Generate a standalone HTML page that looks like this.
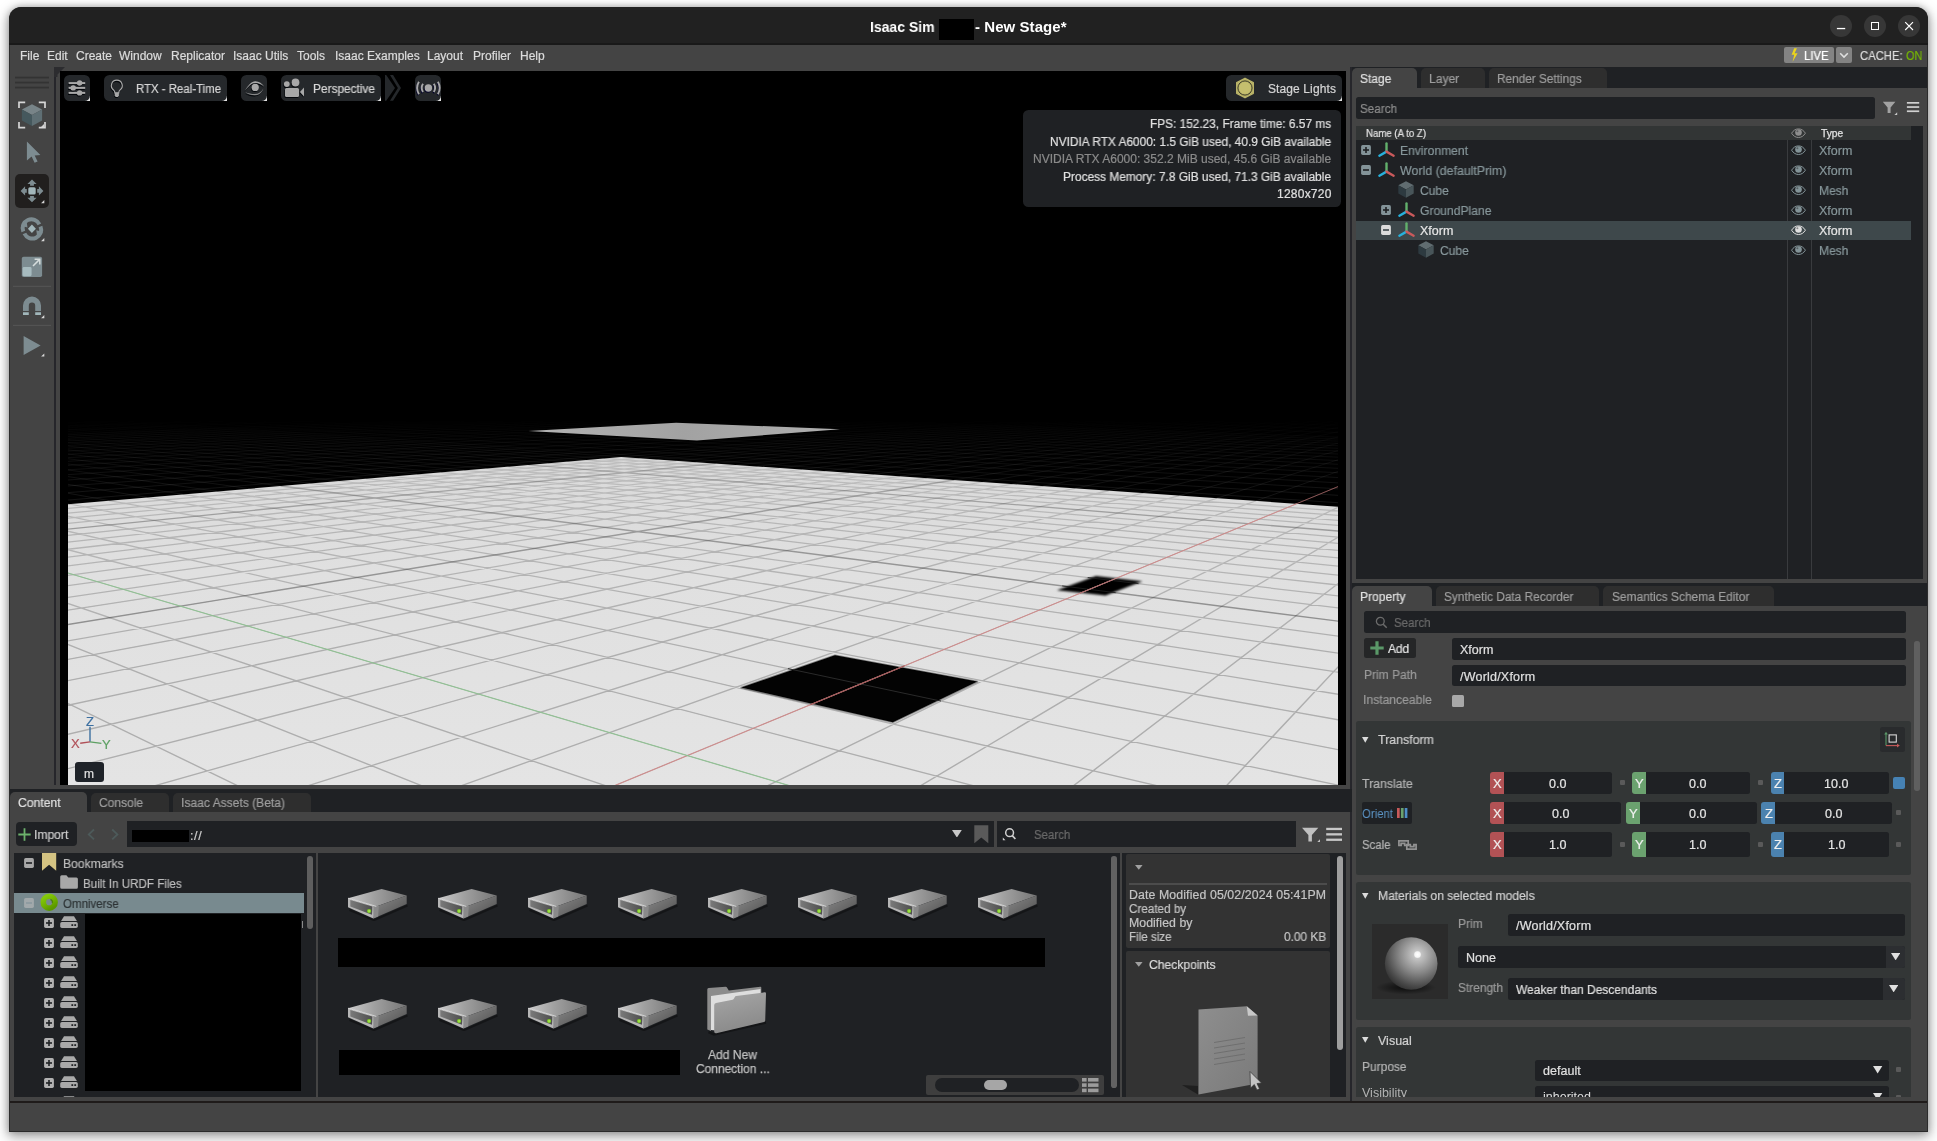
<!DOCTYPE html>
<html lang="en">
<head>
<meta charset="utf-8">
<title>Isaac Sim - New Stage*</title>
<style>
*{box-sizing:border-box;margin:0;padding:0}
html,body{width:1937px;height:1141px;overflow:hidden;background:#fff}
body{font-family:"Liberation Sans",sans-serif;font-size:12px;color:#ccc;position:relative;-webkit-font-smoothing:antialiased}
.a{position:absolute}
.t{position:absolute;white-space:nowrap;line-height:16px;height:16px}
#shadow{position:absolute;left:9px;top:7px;width:1919px;height:1125px;border-radius:12px 12px 0 0;box-shadow:0 4px 13px 1px rgba(0,0,0,.34),0 0 7px rgba(0,0,0,.26)}
#win{position:absolute;left:9px;top:7px;width:1919px;height:1125px;border-radius:12px 12px 0 0;background:#444;overflow:hidden}
#o{position:absolute;left:-9px;top:-7px;width:1937px;height:1141px}
#o div,#o svg,#o span{position:absolute}
#o span{white-space:nowrap;line-height:16px;will-change:transform}
</style>
</head>
<body>
<div id="shadow"></div>
<div id="win"><div id="o">
<!-- title bar -->
<div style="left:9px;top:7px;width:1919px;height:38px;background:#212121;"></div>
<div style="left:9px;top:43px;width:1919px;height:2px;background:#191919;"></div>
<span style="left:870.0px;top:19.4px;font:bold 15px/16px 'Liberation Sans',sans-serif;color:#fff;transform:scaleX(0.9318);transform-origin:0 0;">Isaac Sim</span>
<div style="left:939px;top:19px;width:35px;height:21px;background:#000;"></div>
<span style="left:975.3px;top:19.4px;font:bold 15px/16px 'Liberation Sans',sans-serif;color:#fff;letter-spacing:0.062px;">- New Stage*</span>
<div style="left:1830.3px;top:15.3px;width:21.4px;height:21.4px;background:#373737;border-radius:11px;"></div>
<div style="left:1864.3px;top:15.3px;width:21.4px;height:21.4px;background:#373737;border-radius:11px;"></div>
<div style="left:1898.3px;top:15.3px;width:21.4px;height:21.4px;background:#373737;border-radius:11px;"></div>
<svg style="left:1830px;top:15px" width="90" height="22" viewBox="0 0 90 22">
<rect x="6.9" y="12.9" width="8.3" height="1.3" fill="#fff"/>
<rect x="41.500" y="7.500" width="7" height="7" fill="none" stroke="#fff" stroke-width="1"/>
<path d="M75.2 7.2l7.8 7.8M83 7.2l-7.8 7.8" stroke="#fff" stroke-width="1.15" fill="none"/>
</svg>
<!-- menu bar -->
<div style="left:9px;top:45px;width:1919px;height:23px;background:#444;"></div>
<span style="left:20.3px;top:47.8px;color:#dcdcdc;-webkit-text-stroke:0.2px;">File</span>
<span style="left:46.8px;top:47.8px;color:#dcdcdc;-webkit-text-stroke:0.2px;">Edit</span>
<span style="left:75.8px;top:47.8px;color:#dcdcdc;-webkit-text-stroke:0.2px;">Create</span>
<span style="left:119.0px;top:47.8px;color:#dcdcdc;-webkit-text-stroke:0.2px;">Window</span>
<span style="left:171.0px;top:47.8px;color:#dcdcdc;-webkit-text-stroke:0.2px;">Replicator</span>
<span style="left:233.0px;top:47.8px;color:#dcdcdc;-webkit-text-stroke:0.2px;">Isaac Utils</span>
<span style="left:297.0px;top:47.8px;color:#dcdcdc;-webkit-text-stroke:0.2px;">Tools</span>
<span style="left:335.0px;top:47.8px;color:#dcdcdc;-webkit-text-stroke:0.2px;">Isaac Examples</span>
<span style="left:427.0px;top:47.8px;color:#dcdcdc;-webkit-text-stroke:0.2px;">Layout</span>
<span style="left:473.0px;top:47.8px;color:#dcdcdc;-webkit-text-stroke:0.2px;">Profiler</span>
<span style="left:520.0px;top:47.8px;color:#dcdcdc;-webkit-text-stroke:0.2px;">Help</span>
<div style="left:1784px;top:47px;width:50px;height:16px;background:#838383;border-radius:2px;"></div>
<div style="left:1836px;top:47px;width:16px;height:16px;background:#838383;border-radius:2px;"></div>
<svg style="left:1784px;top:47px" width="70" height="16" viewBox="0 0 70 16">
<path d="M10.2 1.2l-2.6 6.6h2.6l-1.6 7l5-8.6h-3l2.3-5z" fill="#ecd51c"/>
<path d="M56.2 6.3l3.8 3.8l3.8-3.8" stroke="#e0e0e0" stroke-width="1.5" fill="none"/>
</svg>
<span style="left:1804.3px;top:47.8px;color:#fff;transform:scaleX(0.9456);transform-origin:0 0;-webkit-text-stroke:0.2px;">LIVE</span>
<span style="left:1860.3px;top:47.8px;color:#dcdcdc;transform:scaleX(0.9395);transform-origin:0 0;-webkit-text-stroke:0.2px;">CACHE:</span>
<span style="left:1906.2px;top:47.8px;color:#76b900;transform:scaleX(0.9111);transform-origin:0 0;-webkit-text-stroke:0.2px;">ON</span>
<!-- left toolbar -->
<div style="left:54.3px;top:67px;width:2px;height:718px;background:#26262b;"></div>
<svg style="left:54px;top:67px" width="12" height="10" viewBox="0 0 12 10"><path d="M0 0H11L3.5 7.5V10H0Z" fill="#2c2c2f"/></svg>
<svg style="left:10px;top:68px" width="44" height="300" viewBox="10 68 44 300">
<g fill="#333"><rect x="15" y="76.7" width="34" height="1.7"/><rect x="15" y="81.7" width="34" height="1.7"/><rect x="15" y="86.7" width="34" height="1.7"/></g>
<!-- frame selection -->
<g fill="none" stroke="#d6d6d6" stroke-width="1.7"><path d="M19 108V102.300H25.200M38.800 102.300H45V108M45 122V127.700H38.800M25.200 127.700H19V122"/></g>
<path d="M32 104.3L42.1 109.6L32 115L21.9 109.6Z" fill="#788488"/>
<path d="M21.9 109.6L32 115V126L21.9 120.6Z" fill="#45585d"/>
<path d="M42.1 109.6L32 115V126L42.1 120.6Z" fill="#5f6f74"/>
<path d="M44 124v3h-3z" fill="#d2d2d2"/>
<!-- select arrow -->
<path d="M26.9 141.6V160.6L31.6 156.6L34.6 162.8L37.6 161.4L34.7 155.4L40.4 154.9Z" fill="#7d8c91"/>
<!-- move (selected) -->
<rect x="15" y="174" width="34" height="34" rx="5" fill="#211f1e"/>
<g fill="#7d8c91"><path d="M32 179.500L36.600 184H33.900V185.700H30.100V184H27.400Z"/><path d="M32 202.300L36.600 197.800H33.900V196.100H30.100V197.800H27.400Z"/><path d="M20.600 190.900L25.100 186.300V189H26.800V192.800H25.100V195.500Z"/><path d="M43.400 190.900L38.900 186.300V189H37.200V192.800H38.900V195.500Z"/></g>
<rect x="28.300" y="187.200" width="7.400" height="7.400" rx="1.600" fill="#a1b6ba"/>
<path d="M44.3 200v3.2h-3.2z" fill="#d8d8d8"/>
<!-- rotate -->
<g fill="none" stroke="#7d8c91" stroke-width="4"><path d="M23.300 231.400A8.800 8.800 0 0 1 39.400 224.300"/><path d="M40.500 226.400A8.800 8.800 0 0 1 24.400 233.500"/></g>
<path d="M20.800 225.800L26.400 219.800L27.500 227.600Z" fill="#7d8c91"/><path d="M43 232L37.400 238L36.300 230.200Z" fill="#7d8c91"/>
<path d="M31.9 224.6l4 4.2l-4 4.2l-4-4.2z" fill="#a1b6ba"/>
<path d="M44.3 238v3.2h-3.2z" fill="#d8d8d8"/>
<!-- scale -->
<rect x="21.8" y="256.7" width="20.3" height="20.3" rx="1.8" fill="#7d8c91"/>
<rect x="22.6" y="267" width="9" height="9.2" rx="1.4" fill="#a7bbbf"/>
<path d="M33 266l6.6-6.6M34.6 259.3h5.2v5.2" stroke="#d5dcdc" stroke-width="1.5" fill="none"/>
<rect x="13" y="285.8" width="38" height="1" fill="#565656"/>
<!-- snap magnet -->
<path d="M23 311V305.5A9 9 0 0 1 41 305.5V311H35.2V305.8A3.2 3.2 0 0 0 28.8 305.8V311Z" fill="#7d8c91"/>
<path d="M23 312.3h5.8v2.8H23zM35.2 312.3H41v2.8h-5.8z" fill="#a1b6ba"/>
<path d="M44.3 315v3.2h-3.2z" fill="#d8d8d8"/>
<rect x="13" y="324.9" width="38" height="1" fill="#565656"/>
<!-- play -->
<path d="M23.6 336.1L40.6 345.6L23.6 355Z" fill="#7d8c91"/>
<path d="M44.3 353.4v3.2h-3.2z" fill="#d8d8d8"/>
</svg>
<svg style="left:60px;top:71px" width="1286" height="714" viewBox="60 71 1286 714">
<defs><clipPath id="vc"><rect x="68" y="71" width="1270" height="714"/></clipPath>
<linearGradient id="gg" x1="0" y1="457" x2="0" y2="785" gradientUnits="userSpaceOnUse"><stop offset="0" stop-color="#d9d9d9"/><stop offset=".35" stop-color="#e0e0e0"/><stop offset="1" stop-color="#e4e4e4"/></linearGradient>
<linearGradient id="fq" x1="528" y1="0" x2="840" y2="0" gradientUnits="userSpaceOnUse"><stop offset="0" stop-color="#b4b4b4"/><stop offset=".5" stop-color="#a2a2a2"/><stop offset="1" stop-color="#b0b0b0"/></linearGradient>
<filter id="b1" x="-20%" y="-20%" width="140%" height="140%"><feGaussianBlur stdDeviation="1.1"/></filter>
<filter id="b2" x="-20%" y="-30%" width="140%" height="160%"><feGaussianBlur stdDeviation="1.3"/></filter>
</defs>
<rect x="60" y="71" width="1286" height="714" fill="#000"/>
<g clip-path="url(#vc)">
<linearGradient id="fmg" x1="0" y1="420" x2="0" y2="510" gradientUnits="userSpaceOnUse"><stop offset="0" stop-color="#fff" stop-opacity="0"/><stop offset=".35" stop-color="#fff" stop-opacity=".5"/><stop offset="1" stop-color="#fff" stop-opacity="1"/></linearGradient>
<mask id="fm" maskUnits="userSpaceOnUse" x="60" y="71" width="1286" height="714"><rect x="60" y="71" width="1286" height="714" fill="url(#fmg)"/></mask>
<g mask="url(#fm)"><path d="M-150.0,402.5 L1550.0,517.0M1476.1,383.6 L-150.0,518.1M-150.0,400.8 L1550.0,508.8M1468.2,383.6 L-150.0,509.6M-150.0,399.2 L1550.0,501.6M1460.3,383.5 L-150.0,502.0M-150.0,397.8 L1550.0,495.0M1452.4,383.5 L-150.0,495.2M-150.0,396.5 L1550.0,489.1M1444.6,383.5 L-150.0,489.1M-150.0,395.3 L1550.0,483.8M1436.9,383.4 L-150.0,483.6M-150.0,394.3 L1550.0,478.9M1429.2,383.4 L-150.0,478.5M-150.0,393.3 L1550.0,474.4M1421.6,383.3 L-150.0,473.9M-150.0,392.4 L1550.0,470.3M1414.0,383.3 L-150.0,469.7M-150.0,391.6 L1550.0,466.5M1406.5,383.2 L-150.0,465.8M-150.0,390.9 L1550.0,463.0M1399.1,383.2 L-150.0,462.2M-150.0,390.2 L1550.0,459.7M1391.7,383.1 L-150.0,458.9M-150.0,389.5 L1550.0,456.7M1384.4,383.1 L-150.0,455.8M-150.0,388.9 L1550.0,453.8M1377.1,383.0 L-150.0,452.9M-150.0,388.3 L1550.0,451.2M1369.9,383.0 L-150.0,450.2M-150.0,387.8 L1550.0,448.7M1362.7,383.0 L-150.0,447.7M-150.0,387.3 L1550.0,446.4M1355.5,382.9 L-150.0,445.3M-150.0,386.8 L1550.0,444.2M1348.5,382.9 L-150.0,443.1M-150.0,385.7 L1550.0,439.2M1331.0,382.8 L-150.0,438.1M-150.0,384.8 L1550.0,434.9M1313.8,382.7 L-150.0,433.7M-150.0,384.0 L1550.0,431.1M1297.0,382.6 L-150.0,429.9M-150.0,383.3 L1550.0,427.7M1280.4,382.5 L-150.0,426.5M-136.7,382.9 L1550.0,424.7M1264.1,382.4 L-150.0,423.5M-116.6,382.8 L1550.0,422.0M1248.1,382.3 L-150.0,420.8M-96.9,382.7 L1550.0,419.6M1232.3,382.2 L-150.0,418.3M-77.7,382.6 L1550.0,417.4M1216.9,382.1 L-150.0,416.1M-58.9,382.5 L1550.0,415.4M1201.6,382.0 L-150.0,414.1M-40.5,382.3 L1550.0,413.6M1186.7,381.9 L-150.0,412.3M-22.5,382.2 L1550.0,411.9M1172.0,381.8 L-150.0,410.6M-4.9,382.1 L1550.0,410.3M1157.5,381.7 L-150.0,409.0M12.3,382.0 L1550.0,408.9M1143.2,381.6 L-150.0,407.6M29.2,381.9 L1550.0,407.5M1129.2,381.6 L-150.0,406.3M45.7,381.8 L1550.0,406.3M1115.4,381.5 L-150.0,405.0M1530.6,520.1 L1550.0,486.1M1479.3,516.5 L1550.0,441.2M1430.4,513.1 L1550.0,421.7M1383.7,509.9 L1550.0,410.8M1339.1,506.8 L1550.0,403.8M-113.3,519.6 L-150.0,508.8M1296.4,503.8 L1550.0,399.0M-63.7,515.4 L-150.0,492.9M1255.6,501.0 L1550.0,395.4M-16.8,511.4 L-150.0,480.3M1216.4,498.3 L1550.0,392.7M27.5,507.6 L-150.0,470.0M1178.9,495.7 L1550.0,390.5M69.5,504.0 L-150.0,461.5M1142.9,493.2 L1550.0,388.8M109.3,500.6 L-150.0,454.4M1108.3,490.8 L1550.0,387.4M147.1,497.4 L-150.0,448.3M1075.0,488.4 L1550.0,386.1M183.0,494.3 L-150.0,443.0M1043.0,486.2 L1550.0,385.1M217.3,491.4 L-150.0,438.5M1012.1,484.1 L1550.0,384.2M249.9,488.6 L-150.0,434.4M982.4,482.0 L1546.4,384.1M281.0,486.0 L-150.0,430.8M953.8,480.0 L1542.1,384.0M310.8,483.4 L-150.0,427.6M926.2,478.1 L1537.9,384.0M339.3,481.0 L-150.0,424.8M899.5,476.3 L1533.7,384.0M366.5,478.7 L-150.0,422.2M873.7,474.5 L1529.4,384.0M392.6,476.5 L-150.0,419.8M848.8,472.8 L1525.2,383.9M417.6,474.3 L-150.0,417.7M824.7,471.1 L1521.1,383.9M441.7,472.3 L-150.0,415.7M801.4,469.5 L1516.9,383.9M464.7,470.3 L-150.0,413.9M778.8,467.9 L1512.8,383.9M486.9,468.4 L-150.0,412.3M756.9,466.4 L1508.6,383.8M508.3,466.6 L-150.0,410.7M735.8,464.9 L1504.5,383.8M528.9,464.8 L-150.0,409.3M715.2,463.5 L1500.4,383.8M548.7,463.1 L-150.0,408.0M695.3,462.1 L1496.3,383.8M567.8,461.5 L-150.0,406.7M675.9,460.8 L1492.3,383.7M586.2,459.9 L-150.0,405.6M657.1,459.5 L1488.2,383.7M604.0,458.4 L-150.0,404.5M638.9,458.2 L1484.2,383.7M621.2,457.0 L-150.0,403.5M621.2,457.0 L1480.1,383.7" stroke="#fff" stroke-opacity=".1" stroke-width=".9" fill="none"/></g>
<path d="M1296.4,503.8 L1484.6,426.0" stroke="#8a5555" stroke-width="1"/>
<path d="M621.2,457.0 L-150.0,522.8 L-150.0,800.0 L1550.0,800.0 L1550.0,521.4 Z" fill="url(#gg)"/>
<linearGradient id="gmg" x1="0" y1="457" x2="0" y2="785" gradientUnits="userSpaceOnUse"><stop offset="0" stop-color="#fff" stop-opacity=".5"/><stop offset=".25" stop-color="#fff" stop-opacity=".78"/><stop offset=".6" stop-color="#fff" stop-opacity=".95"/><stop offset="1" stop-color="#fff" stop-opacity="1"/></linearGradient>
<mask id="gm" maskUnits="userSpaceOnUse" x="60" y="71" width="1286" height="714"><rect x="60" y="71" width="1286" height="714" fill="url(#gmg)"/></mask>
<g mask="url(#gm)">
<path d="M1550.0,697.1 1550.0,695.7 1529.1,800.0 1529.5,800.0ZM-150.0,769.5 -150.0,769.1 -113.8,800.0 -114.2,800.0ZM1530.7,520.1 1530.6,520.0 1371.0,800.0 1371.4,800.0ZM-150.0,660.1 -150.0,659.9 76.8,800.0 76.4,800.0ZM1479.4,516.5 1479.3,516.5 1212.9,800.0 1213.2,800.0ZM-150.0,597.8 -150.0,597.7 267.2,800.0 266.9,800.0ZM1430.5,513.1 1430.3,513.1 1054.7,800.0 1055.0,800.0ZM-150.0,557.6 -150.0,557.5 457.6,800.0 457.3,800.0ZM1383.8,509.9 1383.7,509.9 896.5,800.0 896.8,800.0ZM-150.0,529.6 -150.0,529.5 647.9,800.0 647.6,800.0ZM1339.2,506.8 1339.0,506.8 738.1,800.0 738.5,800.0ZM-63.7,515.4 -63.6,515.4 1028.3,800.0 1028.0,800.0ZM1255.6,501.0 1255.5,501.0 421.4,800.0 421.6,800.0ZM-16.9,511.4 -16.8,511.4 1218.3,800.0 1218.0,800.0ZM1216.5,498.3 1216.4,498.3 262.9,800.0 263.1,800.0ZM27.4,507.6 27.5,507.6 1408.3,800.0 1408.0,800.0ZM1179.0,495.7 1178.9,495.7 104.3,800.0 104.6,800.0ZM69.4,504.0 69.5,504.0 1550.0,790.6 1550.0,790.7ZM1142.9,493.2 1142.8,493.2 -54.3,800.0 -54.0,800.0ZM109.2,500.6 109.3,500.6 1550.0,757.5 1550.0,757.6ZM1108.3,490.8 1108.2,490.7 -150.0,785.2 -150.0,785.3ZM147.0,497.4 147.1,497.4 1550.0,729.3 1550.0,729.3ZM1075.0,488.4 1075.0,488.4 -150.0,752.2 -150.0,752.3ZM183.0,494.3 183.1,494.3 1550.0,704.9 1550.0,704.9ZM1043.0,486.2 1042.9,486.2 -150.0,724.1 -150.0,724.2ZM217.2,491.4 217.3,491.4 1550.0,683.6 1550.0,683.7ZM1012.2,484.1 1012.1,484.1 -150.0,699.8 -150.0,699.9ZM249.9,488.6 249.9,488.6 1550.0,664.9 1550.0,664.9ZM982.5,482.0 982.4,482.0 -150.0,678.7 -150.0,678.7ZM310.8,483.4 310.8,483.4 1550.0,633.5 1550.0,633.5ZM926.2,478.1 926.1,478.1 -150.0,643.6 -150.0,643.7ZM339.2,481.0 339.3,481.0 1550.0,620.2 1550.0,620.2ZM899.5,476.3 899.4,476.3 -150.0,629.0 -150.0,629.0ZM366.5,478.7 366.5,478.7 1550.0,608.2 1550.0,608.2ZM873.7,474.5 873.7,474.5 -150.0,615.8 -150.0,615.8ZM392.6,476.5 392.6,476.5 1550.0,597.3 1550.0,597.3ZM848.8,472.8 848.8,472.7 -150.0,603.9 -150.0,603.9ZM417.6,474.3 417.7,474.3 1550.0,587.3 1550.0,587.3ZM824.7,471.1 824.7,471.1 -150.0,593.1 -150.0,593.1ZM441.6,472.3 441.7,472.3 1550.0,578.2 1550.0,578.2ZM801.4,469.5 801.4,469.5 -150.0,583.2 -150.0,583.3ZM464.7,470.3 464.8,470.3 1550.0,569.8 1550.0,569.9ZM778.8,467.9 778.8,467.9 -150.0,574.2 -150.0,574.3ZM486.9,468.4 487.0,468.4 1550.0,562.1 1550.0,562.2ZM757.0,466.4 756.9,466.4 -150.0,566.0 -150.0,566.0ZM508.3,466.6 508.3,466.6 1550.0,555.0 1550.0,555.0ZM735.8,464.9 735.7,464.9 -150.0,558.3 -150.0,558.4ZM548.6,463.1 548.7,463.1 1550.0,542.2 1550.0,542.2ZM695.3,462.1 695.2,462.1 -150.0,544.8 -150.0,544.8ZM567.7,461.5 567.8,461.5 1550.0,536.5 1550.0,536.5ZM675.9,460.8 675.9,460.8 -150.0,538.7 -150.0,538.7ZM586.2,459.9 586.2,459.9 1550.0,531.1 1550.0,531.1ZM657.2,459.5 657.1,459.5 -150.0,533.0 -150.0,533.0ZM604.0,458.4 604.0,458.4 1550.0,526.1 1550.0,526.1ZM638.9,458.2 638.9,458.2 -150.0,527.7 -150.0,527.7Z" fill="#000" stroke="#000" stroke-width="1.25" opacity=".235" stroke-linejoin="round"/>
<path d="M281.0,486.0 281.1,486.0 1550.0,648.3 1550.0,648.3ZM953.8,480.0 953.7,480.0 -150.0,660.1 -150.0,660.2ZM528.8,464.8 528.9,464.8 1550.0,548.4 1550.0,548.4ZM715.2,463.5 715.2,463.5 -150.0,551.3 -150.0,551.3Z" fill="#000" stroke="#000" stroke-width="1.35" opacity=".4" stroke-linejoin="round"/>
</g>
<path d="M741.3,687.6 835.0,655.3 977.3,681.6 892.8,722.2Z" fill="#030303" stroke="#000" stroke-opacity=".4" stroke-width="1.8" stroke-linejoin="round"/>
<path d="M1056.8,590.2 1096.0,576.0 1142.5,581.2 1105.5,595.6Z" fill="#020202" filter="url(#b2)"/>
<path d="M787.9,668.6 L941.0,701.1" stroke="#2a2a2a" stroke-width="1"/>
<path d="M1062.2,585.9 L1115.6,592.7 M1087.7,577.5 L1138.5,583.7" stroke="#222" stroke-width=".8"/>
<path d="M1296.6,503.8 1296.3,503.8 579.6,799.9 580.4,800.0Z" fill="#c98b8b" stroke="#c98b8b" stroke-width=".8"/>
<path d="M-113.5,519.6 -113.1,519.6 838.3,799.9 837.5,800.0Z" fill="#8fbd92" stroke="#8fbd92" stroke-width=".8"/>
<path d="M810.4,704.7 L904.7,665.7" stroke="#a05858" stroke-width="1.2"/>
<path d="M1080.1,593.2 L1112.3,579.9" stroke="#a86a6a" stroke-width="1"/>
<path d="M528.3,431 L676.2,422.7 L840.1,429.2 L696.9,440.5Z" fill="url(#fq)"/>
</g>
</svg>

<!-- viewport toolbar -->
<svg style="left:82.8px;top:93.7px" width="7" height="7" viewBox="0 0 7 7"><path d="M7 0V7H0Z" fill="#e6e6e6"/></svg>
<div style="left:64.2px;top:75.1px;width:25.6px;height:25.6px;background:#25282b;border-radius:5.5px;"></div>
<svg style="left:219.9px;top:93.7px" width="7" height="7" viewBox="0 0 7 7"><path d="M7 0V7H0Z" fill="#e6e6e6"/></svg>
<div style="left:104.3px;top:75.1px;width:122.6px;height:25.6px;background:#25282b;border-radius:5.5px;"></div>
<svg style="left:259.9px;top:93.7px" width="7" height="7" viewBox="0 0 7 7"><path d="M7 0V7H0Z" fill="#e6e6e6"/></svg>
<div style="left:241.1px;top:75.1px;width:25.8px;height:25.6px;background:#25282b;border-radius:5.5px;"></div>
<svg style="left:374px;top:93.7px" width="7" height="7" viewBox="0 0 7 7"><path d="M7 0V7H0Z" fill="#e6e6e6"/></svg>
<div style="left:281.1px;top:75.1px;width:99.9px;height:25.6px;background:#25282b;border-radius:5.5px;"></div>
<svg style="left:434px;top:93.7px" width="7" height="7" viewBox="0 0 7 7"><path d="M7 0V7H0Z" fill="#e6e6e6"/></svg>
<div style="left:415.1px;top:75.1px;width:25.9px;height:25.6px;background:#25282b;border-radius:5.5px;"></div>
<svg style="left:1334.8px;top:93.7px" width="7" height="7" viewBox="0 0 7 7"><path d="M7 0V7H0Z" fill="#e6e6e6"/></svg>
<div style="left:1226.3px;top:75.1px;width:115.5px;height:25.6px;background:#25282b;border-radius:5.5px;"></div>
<svg style="left:60px;top:71px" width="390" height="34" viewBox="60 71 390 34">
<g transform="translate(-.5 1.1)"><!-- settings sliders -->
<g fill="#04070b"><rect x="68.600" y="82.100" width="16.600" height="2"/><rect x="68.600" y="86.900" width="16.600" height="2"/><rect x="68.600" y="91.900" width="16.600" height="2"/>
<circle cx="79.600" cy="83" r="2.700"/><circle cx="73.200" cy="87.900" r="2.700"/><circle cx="79.600" cy="92.900" r="2.700"/></g>
<!-- bulb -->
<path d="M116.8 80.2a5.4 5.4 0 0 0-3.3 9.7c.9.8 1.3 1.700 1.400 2.900h3.800c.1-1.200.5-2.100 1.400-2.900a5.400 5.400 0 0 0-3.300-9.700z" fill="none" stroke="#04070b" stroke-width="1.2"/>
<path d="M114.700 92.700h4.200v2.700l-1 1.600h-2.200l-1-1.600z" fill="#04070b"/>
<!-- eye -->
<path d="M244.900 90.800C248 85.500 251.500 81.300 255.400 81.300C259.200 81.300 262 83.700 264.200 86.600C261.400 84.500 258.600 83.100 255.400 83.100C251.600 83.100 248.200 86.600 244.900 90.800Z" fill="#04070b"/>
<path d="M245.200 92.300C248.500 93.500 251.500 94.100 254.600 94.100C258.600 94.100 261.600 91.800 263.400 88.400C261.800 93.100 258.600 95.300 254.600 95.300C251.200 95.300 248 94 245.200 92.300Z" fill="#04070b"/>
<circle cx="255.200" cy="87.400" r="3.600" fill="#04070b"/>
<!-- camera -->
<circle cx="286.800" cy="84.100" r="2.900" fill="#04070b"/><circle cx="295.500" cy="82.500" r="3.900" fill="#04070b"/>
<rect x="285" y="88" width="14" height="8.900" rx="1.500" fill="#04070b"/>
<path d="M299.900 91.900L304 87.500V96.400Z" fill="#04070b"/>
<!-- radio -->
<circle cx="428.400" cy="88" r="3.700" fill="#06062a"/>
<g fill="none" stroke="#06062a" stroke-width="1.900"><path d="M423 83.800A7.800 7.800 0 0 0 423 92.100M433.800 83.800A7.800 7.800 0 0 1 433.800 92.100M418.900 81.700A12.600 12.600 0 0 0 418.900 94.200M437.900 81.700A12.600 12.600 0 0 1 437.900 94.200"/></g>

</g>
<!-- settings sliders -->
<g fill="#a8a8a8"><rect x="68.600" y="82.100" width="16.600" height="2"/><rect x="68.600" y="86.900" width="16.600" height="2"/><rect x="68.600" y="91.900" width="16.600" height="2"/>
<circle cx="79.600" cy="83" r="2.700"/><circle cx="73.200" cy="87.900" r="2.700"/><circle cx="79.600" cy="92.900" r="2.700"/></g>
<!-- bulb -->
<path d="M116.8 80.2a5.4 5.4 0 0 0-3.3 9.7c.9.8 1.3 1.700 1.400 2.900h3.800c.1-1.200.5-2.100 1.400-2.900a5.400 5.400 0 0 0-3.300-9.700z" fill="none" stroke="#a8a8a8" stroke-width="1.2"/>
<path d="M114.700 92.700h4.200v2.700l-1 1.600h-2.200l-1-1.600z" fill="#a8a8a8"/>
<!-- eye -->
<path d="M244.900 90.800C248 85.500 251.500 81.300 255.400 81.300C259.200 81.300 262 83.700 264.200 86.600C261.400 84.500 258.600 83.100 255.400 83.100C251.600 83.100 248.200 86.600 244.900 90.800Z" fill="#a8a8a8"/>
<path d="M245.200 92.300C248.500 93.500 251.500 94.100 254.600 94.100C258.600 94.100 261.600 91.800 263.400 88.400C261.800 93.100 258.600 95.300 254.600 95.300C251.200 95.300 248 94 245.200 92.300Z" fill="#a8a8a8" opacity=".75"/>
<circle cx="255.200" cy="87.400" r="3.600" fill="#a8a8a8"/>
<!-- camera -->
<circle cx="286.800" cy="84.100" r="2.900" fill="#a8a8a8"/><circle cx="295.500" cy="82.500" r="3.900" fill="#a8a8a8"/>
<rect x="285" y="88" width="14" height="8.900" rx="1.500" fill="#a8a8a8"/>
<path d="M299.900 91.900L304 87.500V96.400Z" fill="#a8a8a8"/>
<!-- chevron -->
<path d="M385 75.100h1.200l8.800 12.800l-8.800 12.800H385z" fill="#25282b"/>
<path d="M390 75.100h3.100l7.900 12.800l-7.900 12.800h-3.100l7.900-12.800z" fill="#25282b"/>
<!-- radio -->
<circle cx="428.400" cy="88" r="3.700" fill="#a8a8a8"/>
<g fill="none" stroke="#a8a8a8" stroke-width="1.900"><path d="M423 83.800A7.800 7.800 0 0 0 423 92.100M433.800 83.800A7.800 7.800 0 0 1 433.800 92.100M418.900 81.700A12.600 12.600 0 0 0 418.900 94.200M437.900 81.700A12.600 12.600 0 0 1 437.900 94.200"/></g>

</svg>
<span style="left:136.4px;top:80.9px;color:#d6d6d6;transform:scaleX(0.9514);transform-origin:0 0;-webkit-text-stroke:0.2px;">RTX - Real-Time</span>
<span style="left:312.8px;top:80.9px;color:#d6d6d6;transform:scaleX(0.9888);transform-origin:0 0;-webkit-text-stroke:0.2px;">Perspective</span>
<svg style="left:1233.500px;top:76.800px" width="22" height="22" viewBox="-11 -11 22 22">
<path d="M0-9.700L8.300-5.300V5.300L0 9.700L-8.300 5.300V-5.300Z" fill="#b9b368" stroke="#b9b368" stroke-width="1.400" stroke-linejoin="round"/>
<circle cx="0" cy="0" r="7.100" fill="none" stroke="#3b3a27" stroke-width="1"/>
<circle cx="0" cy="0" r="6" fill="#c5bf6e"/></svg>
<span style="left:1268.4px;top:80.9px;color:#d6d6d6;letter-spacing:0.107px;-webkit-text-stroke:0.2px;">Stage Lights</span>
<div style="left:1023.2px;top:110.2px;width:317.7px;height:97.1px;background:#1f2124;border-radius:5.5px;"></div>
<span style="left:1150.3px;top:116.2px;color:#e0e0e0;transform:scaleX(0.9869);transform-origin:0 0;-webkit-text-stroke:0.2px;">FPS: 152.23, Frame time: 6.57 ms</span>
<span style="left:1050.1px;top:134.0px;color:#e0e0e0;transform:scaleX(0.9903);transform-origin:0 0;-webkit-text-stroke:0.2px;">NVIDIA RTX A6000: 1.5 GiB used, 40.9 GiB available</span>
<span style="left:1033.1px;top:151.3px;color:#8a8a8a;letter-spacing:0.005px;-webkit-text-stroke:0.2px;">NVIDIA RTX A6000: 352.2 MiB used, 45.6 GiB available</span>
<span style="left:1063.3px;top:169.1px;color:#e0e0e0;transform:scaleX(0.9921);transform-origin:0 0;-webkit-text-stroke:0.2px;">Process Memory: 7.8 GiB used, 71.3 GiB available</span>
<span style="left:1276.7px;top:186.2px;color:#e0e0e0;letter-spacing:0.235px;-webkit-text-stroke:0.2px;">1280x720</span>
<svg style="left:68px;top:712px" width="50" height="42" viewBox="68 712 50 42">
<path d="M90 726.800V741.800" stroke="#3c6fa0" stroke-width="1.400"/>
<path d="M90 741.900L80.200 743.200" stroke="#b05058" stroke-width="1.400"/>
<path d="M90 741.900L101.400 743.400" stroke="#5da063" stroke-width="1.400"/></svg>
<span style="left:85.6px;top:713.5px;font:normal 13px/16px 'Liberation Sans',sans-serif;color:#3c6fa0;-webkit-text-stroke:0.2px;">Z</span>
<span style="left:70.7px;top:736.0px;font:normal 13px/16px 'Liberation Sans',sans-serif;color:#b05058;-webkit-text-stroke:0.2px;">X</span>
<span style="left:102.1px;top:736.5px;font:normal 13px/16px 'Liberation Sans',sans-serif;color:#5da063;-webkit-text-stroke:0.2px;">Y</span>
<div style="left:75.3px;top:762.3px;width:28.4px;height:19.4px;background:#1f2329;border-radius:3px;"></div>
<span style="left:84.3px;top:765.8px;color:#e0e0e0;-webkit-text-stroke:0.2px;">m</span>
<!-- stage panel -->
<div style="left:1350.2px;top:67px;width:2px;height:1035px;background:#26262b;"></div>
<div style="left:1352.2px;top:67px;width:576px;height:21px;background:#1f2124;"></div>
<div style="left:1352.2px;top:68px;width:65px;height:20.6px;background:#444;border-radius:5px 5px 0 0;"></div>
<span style="left:1360.3px;top:70.5px;font:normal 12.5px/16px 'Liberation Sans',sans-serif;color:#e0e0e0;transform:scaleX(0.9580);transform-origin:0 0;-webkit-text-stroke:0.2px;">Stage</span>
<div style="left:1421px;top:68.2px;width:64px;height:19.8px;background:#2e2e2e;border-radius:5px 5px 0 0;"></div>
<span style="left:1429.3px;top:70.5px;font:normal 12.5px/16px 'Liberation Sans',sans-serif;color:#9e9e9e;transform:scaleX(0.9686);transform-origin:0 0;-webkit-text-stroke:0.2px;">Layer</span>
<div style="left:1489px;top:68.2px;width:118px;height:19.8px;background:#2e2e2e;border-radius:5px 5px 0 0;"></div>
<span style="left:1497.2px;top:70.5px;font:normal 12.5px/16px 'Liberation Sans',sans-serif;color:#9e9e9e;transform:scaleX(0.9438);transform-origin:0 0;-webkit-text-stroke:0.2px;">Render Settings</span>
<div style="left:1356.2px;top:97px;width:518.8px;height:21.6px;background:#1f2124;border-radius:2.5px;"></div>
<span style="left:1360.3px;top:100.6px;font:normal 12.5px/16px 'Liberation Sans',sans-serif;color:#8c8c8c;transform:scaleX(0.9341);transform-origin:0 0;-webkit-text-stroke:0.2px;">Search</span>
<svg style="left:1881px;top:100px" width="40" height="16" viewBox="0 0 40 16"><path d="M1.800 1.700H14.400L9.600 7.600V13.100H6.600V7.600Z" fill="#a2a2a2"/><path d="M16.200 12.200V15H13.400Z" fill="#c8c8c8"/><g fill="#d0d0d0"><rect x="25.900" y="2" width="12.300" height="1.700"/><rect x="25.900" y="6.200" width="12.300" height="1.700"/><rect x="25.900" y="10.400" width="12.300" height="1.700"/></g></svg>
<div style="left:1356.2px;top:126.2px;width:566.8px;height:452.5px;background:#1f2124;"></div>
<div style="left:1356.2px;top:126.2px;width:554.8px;height:13.8px;background:#323535;"></div>
<span style="left:1366.3px;top:125.7px;font:normal 10.3px/16px 'Liberation Sans',sans-serif;color:#e4e4e4;transform:scaleX(0.9361);transform-origin:0 0;-webkit-text-stroke:0.2px;">Name (A to Z)</span>
<svg style="left:1791.4px;top:128.1px" width="15" height="10.4" viewBox="0 0 15 10.4"><path d="M.6 5.200C2.400 2.300 4.700 .9 7.500 .9s5.100 1.400 6.900 4.300C12.600 8.100 10.300 9.500 7.500 9.500S2.400 8.100 .6 5.200z" fill="none" stroke="#8e8e8e" stroke-width="1"/><circle cx="7.500" cy="4.500" r="3.300" fill="#8e8e8e"/><circle cx="6.400" cy="3.200" r="1" fill="#1f2124" opacity=".45"/></svg>
<span style="left:1821.3px;top:125.7px;font:normal 10.3px/16px 'Liberation Sans',sans-serif;color:#e4e4e4;transform:scaleX(0.9943);transform-origin:0 0;-webkit-text-stroke:0.25px;">Type</span>
<div style="left:1787.2px;top:140px;width:1px;height:438.7px;background:#393b3e;"></div>
<div style="left:1811px;top:140px;width:1px;height:438.7px;background:#393b3e;"></div>
<svg style="left:1361.1px;top:145px" width="10" height="10" viewBox="0 0 10 10"><rect x=".1" y=".1" width="9.8" height="9.8" rx="1.6" fill="#839398"/><rect x="2" y="4.2" width="6" height="1.6" fill="#1f2124"/><rect x="4.2" y="2" width="1.6" height="6" fill="#1f2124"/></svg>
<svg style="left:1377.6px;top:142.4px" width="17" height="15.5" viewBox="0 0 17 15.5"><g stroke-width="2.400" stroke-linecap="round" fill="none"><path d="M8.5 9.600V1.500" stroke="#62b06c"/><path d="M8.500 9.600L1.400 13.700" stroke="#27b0dc"/><path d="M8.500 9.600L15.600 13.700" stroke="#c9595b"/></g></svg>
<span style="left:1400.4px;top:142.9px;font:normal 12.5px/16px 'Liberation Sans',sans-serif;color:#87979b;transform:scaleX(0.9688);transform-origin:0 0;-webkit-text-stroke:0.2px;">Environment</span>
<svg style="left:1791.4px;top:144.8px" width="15" height="10.4" viewBox="0 0 15 10.4"><path d="M.6 5.200C2.400 2.300 4.700 .9 7.500 .9s5.100 1.400 6.900 4.300C12.600 8.100 10.300 9.500 7.500 9.500S2.400 8.100 .6 5.200z" fill="none" stroke="#839398" stroke-width="1"/><circle cx="7.500" cy="4.500" r="3.300" fill="#839398"/><circle cx="6.400" cy="3.200" r="1" fill="#1f2124" opacity=".45"/></svg>
<span style="left:1819.3px;top:142.9px;font:normal 12.5px/16px 'Liberation Sans',sans-serif;color:#87979b;transform:scaleX(0.9987);transform-origin:0 0;-webkit-text-stroke:0.2px;">Xform</span>
<svg style="left:1361.1px;top:165px" width="10" height="10" viewBox="0 0 10 10"><rect x=".1" y=".1" width="9.8" height="9.8" rx="1.6" fill="#839398"/><rect x="2" y="4.2" width="6" height="1.6" fill="#1f2124"/></svg>
<svg style="left:1377.6px;top:162.4px" width="17" height="15.5" viewBox="0 0 17 15.5"><g stroke-width="2.400" stroke-linecap="round" fill="none"><path d="M8.5 9.600V1.500" stroke="#62b06c"/><path d="M8.500 9.600L1.400 13.700" stroke="#27b0dc"/><path d="M8.500 9.600L15.600 13.700" stroke="#c9595b"/></g></svg>
<span style="left:1400.4px;top:162.9px;font:normal 12.5px/16px 'Liberation Sans',sans-serif;color:#87979b;transform:scaleX(0.9913);transform-origin:0 0;-webkit-text-stroke:0.2px;">World (defaultPrim)</span>
<svg style="left:1791.4px;top:164.8px" width="15" height="10.4" viewBox="0 0 15 10.4"><path d="M.6 5.200C2.400 2.300 4.700 .9 7.500 .9s5.100 1.400 6.900 4.300C12.600 8.100 10.300 9.500 7.500 9.500S2.400 8.100 .6 5.200z" fill="none" stroke="#839398" stroke-width="1"/><circle cx="7.500" cy="4.500" r="3.300" fill="#839398"/><circle cx="6.400" cy="3.200" r="1" fill="#1f2124" opacity=".45"/></svg>
<span style="left:1819.3px;top:162.9px;font:normal 12.5px/16px 'Liberation Sans',sans-serif;color:#87979b;transform:scaleX(0.9987);transform-origin:0 0;-webkit-text-stroke:0.2px;">Xform</span>
<svg style="left:1398.1px;top:181.3px" width="16" height="17" viewBox="0 0 16 17"><path d="M8 .3L15.700 4.300L8 8.600L.3 4.300Z" fill="#606c70"/><path d="M.3 4.300L8 8.600V16.700L.3 12.500Z" fill="#2d3a40"/><path d="M15.700 4.300L8 8.600V16.700L15.700 12.500Z" fill="#485559"/></svg>
<span style="left:1420.4px;top:182.9px;font:normal 12.5px/16px 'Liberation Sans',sans-serif;color:#87979b;transform:scaleX(0.9635);transform-origin:0 0;-webkit-text-stroke:0.2px;">Cube</span>
<svg style="left:1791.4px;top:184.8px" width="15" height="10.4" viewBox="0 0 15 10.4"><path d="M.6 5.200C2.400 2.300 4.700 .9 7.500 .9s5.100 1.400 6.900 4.300C12.600 8.100 10.300 9.500 7.500 9.500S2.400 8.100 .6 5.200z" fill="none" stroke="#839398" stroke-width="1"/><circle cx="7.500" cy="4.500" r="3.300" fill="#839398"/><circle cx="6.400" cy="3.200" r="1" fill="#1f2124" opacity=".45"/></svg>
<span style="left:1819.3px;top:182.9px;font:normal 12.5px/16px 'Liberation Sans',sans-serif;color:#87979b;transform:scaleX(0.9647);transform-origin:0 0;-webkit-text-stroke:0.2px;">Mesh</span>
<svg style="left:1381.1px;top:205px" width="10" height="10" viewBox="0 0 10 10"><rect x=".1" y=".1" width="9.8" height="9.8" rx="1.6" fill="#839398"/><rect x="2" y="4.2" width="6" height="1.6" fill="#1f2124"/><rect x="4.2" y="2" width="1.6" height="6" fill="#1f2124"/></svg>
<svg style="left:1397.6px;top:202.4px" width="17" height="15.5" viewBox="0 0 17 15.5"><g stroke-width="2.400" stroke-linecap="round" fill="none"><path d="M8.5 9.600V1.500" stroke="#62b06c"/><path d="M8.500 9.600L1.400 13.700" stroke="#27b0dc"/><path d="M8.500 9.600L15.600 13.700" stroke="#c9595b"/></g></svg>
<span style="left:1420.4px;top:202.9px;font:normal 12.5px/16px 'Liberation Sans',sans-serif;color:#87979b;transform:scaleX(0.9705);transform-origin:0 0;-webkit-text-stroke:0.2px;">GroundPlane</span>
<svg style="left:1791.4px;top:204.8px" width="15" height="10.4" viewBox="0 0 15 10.4"><path d="M.6 5.200C2.400 2.300 4.700 .9 7.500 .9s5.100 1.400 6.900 4.300C12.600 8.100 10.300 9.500 7.500 9.500S2.400 8.100 .6 5.200z" fill="none" stroke="#839398" stroke-width="1"/><circle cx="7.500" cy="4.500" r="3.300" fill="#839398"/><circle cx="6.400" cy="3.200" r="1" fill="#1f2124" opacity=".45"/></svg>
<span style="left:1819.3px;top:202.9px;font:normal 12.5px/16px 'Liberation Sans',sans-serif;color:#87979b;transform:scaleX(0.9987);transform-origin:0 0;-webkit-text-stroke:0.2px;">Xform</span>
<div style="left:1356.2px;top:220.5px;width:554.8px;height:19.8px;background:#3e484b;"></div>
<svg style="left:1381.1px;top:225px" width="10" height="10" viewBox="0 0 10 10"><rect x=".1" y=".1" width="9.8" height="9.8" rx="1.6" fill="#dcdcdc"/><rect x="2" y="4.2" width="6" height="1.6" fill="#3e484b"/></svg>
<svg style="left:1397.6px;top:222.4px" width="17" height="15.5" viewBox="0 0 17 15.5"><g stroke-width="2.400" stroke-linecap="round" fill="none"><path d="M8.5 9.600V1.500" stroke="#62b06c"/><path d="M8.500 9.600L1.400 13.700" stroke="#27b0dc"/><path d="M8.500 9.600L15.600 13.700" stroke="#c9595b"/></g></svg>
<span style="left:1420.4px;top:222.9px;font:normal 12.5px/16px 'Liberation Sans',sans-serif;color:#e6e6e6;transform:scaleX(0.9987);transform-origin:0 0;-webkit-text-stroke:0.2px;">Xform</span>
<svg style="left:1791.4px;top:224.8px" width="15" height="10.4" viewBox="0 0 15 10.4"><path d="M.6 5.200C2.400 2.300 4.700 .9 7.500 .9s5.100 1.400 6.900 4.300C12.600 8.100 10.300 9.500 7.500 9.500S2.400 8.100 .6 5.200z" fill="none" stroke="#e0e0e0" stroke-width="1"/><circle cx="7.500" cy="4.500" r="3.300" fill="#e0e0e0"/><circle cx="6.400" cy="3.200" r="1" fill="#1f2124" opacity=".45"/></svg>
<span style="left:1819.3px;top:222.9px;font:normal 12.5px/16px 'Liberation Sans',sans-serif;color:#e6e6e6;transform:scaleX(0.9987);transform-origin:0 0;-webkit-text-stroke:0.2px;">Xform</span>
<svg style="left:1418.1px;top:241.3px" width="16" height="17" viewBox="0 0 16 17"><path d="M8 .3L15.700 4.300L8 8.600L.3 4.300Z" fill="#606c70"/><path d="M.3 4.300L8 8.600V16.700L.3 12.500Z" fill="#2d3a40"/><path d="M15.700 4.300L8 8.600V16.700L15.700 12.500Z" fill="#485559"/></svg>
<span style="left:1440.4px;top:242.9px;font:normal 12.5px/16px 'Liberation Sans',sans-serif;color:#87979b;transform:scaleX(0.9635);transform-origin:0 0;-webkit-text-stroke:0.2px;">Cube</span>
<svg style="left:1791.4px;top:244.8px" width="15" height="10.4" viewBox="0 0 15 10.4"><path d="M.6 5.200C2.400 2.300 4.700 .9 7.500 .9s5.100 1.400 6.900 4.300C12.600 8.100 10.300 9.500 7.500 9.500S2.400 8.100 .6 5.200z" fill="none" stroke="#839398" stroke-width="1"/><circle cx="7.500" cy="4.500" r="3.300" fill="#839398"/><circle cx="6.400" cy="3.200" r="1" fill="#1f2124" opacity=".45"/></svg>
<span style="left:1819.3px;top:242.9px;font:normal 12.5px/16px 'Liberation Sans',sans-serif;color:#87979b;transform:scaleX(0.9647);transform-origin:0 0;-webkit-text-stroke:0.2px;">Mesh</span>
<!-- property panel -->
<div style="left:1352.2px;top:583px;width:576px;height:22.7px;background:#1f2124;"></div>
<div style="left:1352.2px;top:585.9px;width:79.9px;height:20.4px;background:#444;border-radius:5px 5px 0 0;"></div>
<span style="left:1360.3px;top:589.0px;font:normal 12.5px/16px 'Liberation Sans',sans-serif;color:#e0e0e0;transform:scaleX(0.9630);transform-origin:0 0;-webkit-text-stroke:0.2px;">Property</span>
<div style="left:1436px;top:586.1px;width:162.8px;height:19.6px;background:#2e2e2e;border-radius:5px 5px 0 0;"></div>
<span style="left:1444.2px;top:589.0px;font:normal 12.5px/16px 'Liberation Sans',sans-serif;color:#9e9e9e;transform:scaleX(0.9509);transform-origin:0 0;-webkit-text-stroke:0.2px;">Synthetic Data Recorder</span>
<div style="left:1603.4px;top:586.1px;width:170.4px;height:19.6px;background:#2e2e2e;border-radius:5px 5px 0 0;"></div>
<span style="left:1611.5px;top:589.0px;font:normal 12.5px/16px 'Liberation Sans',sans-serif;color:#9e9e9e;transform:scaleX(0.9547);transform-origin:0 0;-webkit-text-stroke:0.2px;">Semantics Schema Editor</span>
<div style="left:1352.2px;top:605.7px;width:576px;height:496.5px;background:#444;"></div>
<div style="left:1364.2px;top:611px;width:541.7px;height:21.7px;background:#1f2124;border-radius:2.5px;"></div>
<svg style="left:1374.5px;top:616px" width="13" height="13" viewBox="0 0 13 13"><circle cx="5.300" cy="5.300" r="3.900" fill="none" stroke="#6c6c6c" stroke-width="1.300"/><path d="M8.200 8.200L11.700 11.700" stroke="#6c6c6c" stroke-width="1.500"/></svg>
<span style="left:1394.4px;top:614.6px;font:normal 12.5px/16px 'Liberation Sans',sans-serif;color:#6a6a6a;transform:scaleX(0.9215);transform-origin:0 0;-webkit-text-stroke:0.2px;">Search</span>
<div style="left:1364.2px;top:638px;width:51.8px;height:19.8px;background:#252627;border-radius:2.5px;"></div>
<svg style="left:1370px;top:641px" width="14" height="14" viewBox="0 0 14 14"><path d="M5.400 .3H8.600V5.400H13.700V8.600H8.600V13.700H5.400V8.600H.3V5.400H5.400Z" fill="#5a9868"/></svg>
<span style="left:1388.4px;top:640.7px;font:normal 12.5px/16px 'Liberation Sans',sans-serif;color:#e6e6e6;transform:scaleX(0.9528);transform-origin:0 0;-webkit-text-stroke:0.2px;">Add</span>
<div style="left:1452.2px;top:638px;width:453.8px;height:21.7px;background:#1f2124;border-radius:2.5px;"></div>
<span style="left:1460.0px;top:641.9px;font:normal 12.5px/16px 'Liberation Sans',sans-serif;color:#e0e0e0;transform:scaleX(0.9987);transform-origin:0 0;-webkit-text-stroke:0.2px;">Xform</span>
<span style="left:1364.3px;top:666.8px;font:normal 12.5px/16px 'Liberation Sans',sans-serif;color:#9a9a9a;transform:scaleX(0.9601);transform-origin:0 0;-webkit-text-stroke:0.2px;">Prim Path</span>
<div style="left:1452.2px;top:665.2px;width:453.8px;height:21.3px;background:#1f2124;border-radius:2.5px;"></div>
<span style="left:1460.0px;top:669.0px;font:normal 12.5px/16px 'Liberation Sans',sans-serif;color:#e0e0e0;letter-spacing:0.216px;-webkit-text-stroke:0.2px;">/World/Xform</span>
<span style="left:1363.3px;top:691.9px;font:normal 12.5px/16px 'Liberation Sans',sans-serif;color:#9a9a9a;transform:scaleX(0.9705);transform-origin:0 0;-webkit-text-stroke:0.2px;">Instanceable</span>
<div style="left:1452.2px;top:695px;width:11.8px;height:11.8px;background:#a8a8a8;border-radius:1.5px;"></div>
<div style="left:1914.2px;top:641px;width:5.4px;height:150px;background:#5f5f5f;border-radius:2.7px;"></div>
<div style="left:1356.2px;top:721.2px;width:554.5px;height:154.3px;background:#333636;border-radius:2.5px;"></div>
<svg style="left:1362.4px;top:737.1px" width="6.5" height="5.8" viewBox="0 0 6.5 5.8"><path d="M0 0H6.5 L3.25 5.8 Z" fill="#dcdcdc"/></svg>
<span style="left:1377.6px;top:732.0px;font:normal 12.5px/16px 'Liberation Sans',sans-serif;color:#d2d2d2;transform:scaleX(0.9894);transform-origin:0 0;-webkit-text-stroke:0.2px;">Transform</span>
<div style="left:1880.1px;top:727.1px;width:24.9px;height:24.8px;background:#292b2d;border-radius:2.5px;"></div>
<svg style="left:1880.1px;top:727.1px" width="25" height="25" viewBox="0 0 25 25"><rect x="9.100" y="7.900" width="7.200" height="7.200" fill="none" stroke="#d8d8d8" stroke-width="1.100"/><path d="M6 18.600V6.800" stroke="#5a9868" stroke-width="1.100"/><path d="M6 4.800l1.800 2.800H4.200z" fill="#5a9868"/><path d="M6 18.600H17.800" stroke="#c85a5a" stroke-width="1.100"/><path d="M19.800 18.600l-2.800 1.800v-3.600z" fill="#c85a5a"/></svg>
<span style="left:1362.4px;top:775.5px;font:normal 12.5px/16px 'Liberation Sans',sans-serif;color:#b4b4b4;transform:scaleX(0.9834);transform-origin:0 0;-webkit-text-stroke:0.2px;">Translate</span>
<div style="left:1489.8px;top:772px;width:14.3px;height:22px;background:#b25255;border-radius:3px 0 0 3px;"></div>
<div style="left:1504.1px;top:772px;width:107.9px;height:22px;background:#1f2124;border-radius:0 2.5px 2.5px 0;"></div>
<span style="left:1492.8px;top:775.6px;font:normal 13px/16px 'Liberation Sans',sans-serif;color:#f0f0f0;-webkit-text-stroke:0.2px;">X</span>
<span style="left:1548.7px;top:775.6px;font:normal 12.5px/16px 'Liberation Sans',sans-serif;color:#e6e6e6;-webkit-text-stroke:0.2px;">0.0</span>
<div style="left:1620px;top:780px;width:4.9px;height:4.9px;background:#5a5a5a;border-radius:1px;"></div>
<div style="left:1632.2px;top:772px;width:13.9px;height:22px;background:#6ba26f;border-radius:3px 0 0 3px;"></div>
<div style="left:1646.1px;top:772px;width:103.6px;height:22px;background:#1f2124;border-radius:0 2.5px 2.5px 0;"></div>
<span style="left:1635.0px;top:775.6px;font:normal 13px/16px 'Liberation Sans',sans-serif;color:#f0f0f0;-webkit-text-stroke:0.2px;">Y</span>
<span style="left:1689.4px;top:775.6px;font:normal 12.5px/16px 'Liberation Sans',sans-serif;color:#e6e6e6;-webkit-text-stroke:0.2px;">0.0</span>
<div style="left:1758.1px;top:780px;width:4.9px;height:4.9px;background:#5a5a5a;border-radius:1px;"></div>
<div style="left:1770.6px;top:772px;width:13.7px;height:22px;background:#4b82af;border-radius:3px 0 0 3px;"></div>
<div style="left:1784.3px;top:772px;width:104.7px;height:22px;background:#1f2124;border-radius:0 2.5px 2.5px 0;"></div>
<span style="left:1773.7px;top:775.6px;font:normal 13px/16px 'Liberation Sans',sans-serif;color:#f0f0f0;-webkit-text-stroke:0.2px;">Z</span>
<span style="left:1823.8px;top:775.6px;font:normal 12.5px/16px 'Liberation Sans',sans-serif;color:#e6e6e6;-webkit-text-stroke:0.2px;">10.0</span>
<div style="left:1893px;top:777px;width:12px;height:12px;background:#4682b4;border-radius:2px;"></div>
<div style="left:1362.1px;top:802px;width:49.9px;height:21.7px;background:#1f2124;border-radius:2px;"></div>
<span style="left:1362.3px;top:805.5px;font:normal 12.5px/16px 'Liberation Sans',sans-serif;color:#5b93c4;transform:scaleX(0.9105);transform-origin:0 0;">Orient</span>
<svg style="left:1396.9px;top:808px" width="11" height="10" viewBox="0 0 11 10"><rect x="0" y="0" width="2.700" height="10" fill="#c85a5a"/><rect x="3.900" y="0" width="2.700" height="10" fill="#6ba26f"/><rect x="7.700" y="0" width="2.700" height="10" fill="#4f8fc8"/></svg>
<div style="left:1489.8px;top:802px;width:14.3px;height:21.7px;background:#b25255;border-radius:3px 0 0 3px;"></div>
<div style="left:1504.1px;top:802px;width:116.6px;height:21.7px;background:#1f2124;border-radius:0 2.5px 2.5px 0;"></div>
<span style="left:1492.8px;top:805.5px;font:normal 13px/16px 'Liberation Sans',sans-serif;color:#f0f0f0;-webkit-text-stroke:0.2px;">X</span>
<span style="left:1552.4px;top:805.5px;font:normal 12.5px/16px 'Liberation Sans',sans-serif;color:#e6e6e6;-webkit-text-stroke:0.2px;">0.0</span>
<div style="left:1625.7px;top:802px;width:13.9px;height:21.7px;background:#6ba26f;border-radius:3px 0 0 3px;"></div>
<div style="left:1639.6px;top:802px;width:117.1px;height:21.7px;background:#1f2124;border-radius:0 2.5px 2.5px 0;"></div>
<span style="left:1628.5px;top:805.5px;font:normal 13px/16px 'Liberation Sans',sans-serif;color:#f0f0f0;-webkit-text-stroke:0.2px;">Y</span>
<span style="left:1688.7px;top:805.5px;font:normal 12.5px/16px 'Liberation Sans',sans-serif;color:#e6e6e6;-webkit-text-stroke:0.2px;">0.0</span>
<div style="left:1761.3px;top:802px;width:14px;height:21.7px;background:#4b82af;border-radius:3px 0 0 3px;"></div>
<div style="left:1775.3px;top:802px;width:116.7px;height:21.7px;background:#1f2124;border-radius:0 2.5px 2.5px 0;"></div>
<span style="left:1764.5px;top:805.5px;font:normal 13px/16px 'Liberation Sans',sans-serif;color:#f0f0f0;-webkit-text-stroke:0.2px;">Z</span>
<span style="left:1824.5px;top:805.5px;font:normal 12.5px/16px 'Liberation Sans',sans-serif;color:#e6e6e6;-webkit-text-stroke:0.2px;">0.0</span>
<div style="left:1896px;top:810.4px;width:4.9px;height:4.9px;background:#5a5a5a;border-radius:1px;"></div>
<span style="left:1362.4px;top:837.2px;font:normal 12.5px/16px 'Liberation Sans',sans-serif;color:#b4b4b4;transform:scaleX(0.9143);transform-origin:0 0;-webkit-text-stroke:0.2px;">Scale</span>
<svg style="left:1398px;top:840px" width="19" height="10" viewBox="0 0 19 10"><path d="M.9 .9H10.200V5.300H6.700V3.300H3.100V5.300H.9Z" fill="none" stroke="#929292" stroke-width="1.700"/><path d="M18.100 9.100H8.800V4.700H12.300V6.700H15.900V4.700H18.100Z" fill="none" stroke="#929292" stroke-width="1.700"/></svg>
<div style="left:1489.8px;top:832px;width:14.3px;height:24.6px;background:#b25255;border-radius:3px 0 0 3px;"></div>
<div style="left:1504.1px;top:832px;width:107.9px;height:24.6px;background:#1f2124;border-radius:0 2.5px 2.5px 0;"></div>
<span style="left:1492.8px;top:836.9px;font:normal 13px/16px 'Liberation Sans',sans-serif;color:#f0f0f0;-webkit-text-stroke:0.2px;">X</span>
<span style="left:1548.7px;top:836.9px;font:normal 12.5px/16px 'Liberation Sans',sans-serif;color:#e6e6e6;-webkit-text-stroke:0.2px;">1.0</span>
<div style="left:1620px;top:842px;width:4.9px;height:4.9px;background:#5a5a5a;border-radius:1px;"></div>
<div style="left:1632.2px;top:832px;width:13.9px;height:24.6px;background:#6ba26f;border-radius:3px 0 0 3px;"></div>
<div style="left:1646.1px;top:832px;width:103.6px;height:24.6px;background:#1f2124;border-radius:0 2.5px 2.5px 0;"></div>
<span style="left:1635.0px;top:836.9px;font:normal 13px/16px 'Liberation Sans',sans-serif;color:#f0f0f0;-webkit-text-stroke:0.2px;">Y</span>
<span style="left:1689.4px;top:836.9px;font:normal 12.5px/16px 'Liberation Sans',sans-serif;color:#e6e6e6;-webkit-text-stroke:0.2px;">1.0</span>
<div style="left:1758.1px;top:842px;width:4.9px;height:4.9px;background:#5a5a5a;border-radius:1px;"></div>
<div style="left:1770.6px;top:832px;width:13.7px;height:24.6px;background:#4b82af;border-radius:3px 0 0 3px;"></div>
<div style="left:1784.3px;top:832px;width:104.7px;height:24.6px;background:#1f2124;border-radius:0 2.5px 2.5px 0;"></div>
<span style="left:1773.7px;top:836.9px;font:normal 13px/16px 'Liberation Sans',sans-serif;color:#f0f0f0;-webkit-text-stroke:0.2px;">Z</span>
<span style="left:1827.7px;top:836.9px;font:normal 12.5px/16px 'Liberation Sans',sans-serif;color:#e6e6e6;-webkit-text-stroke:0.2px;">1.0</span>
<div style="left:1896px;top:842px;width:4.9px;height:4.9px;background:#5a5a5a;border-radius:1px;"></div>
<div style="left:1356.2px;top:882.3px;width:554.5px;height:138.2px;background:#333636;border-radius:2.5px;"></div>
<svg style="left:1362.4px;top:892.8px" width="6.5" height="5.8" viewBox="0 0 6.5 5.8"><path d="M0 0H6.5 L3.25 5.8 Z" fill="#dcdcdc"/></svg>
<span style="left:1377.6px;top:888.2px;font:normal 12.5px/16px 'Liberation Sans',sans-serif;color:#d2d2d2;transform:scaleX(0.9667);transform-origin:0 0;-webkit-text-stroke:0.2px;">Materials on selected models</span>
<div style="left:1372px;top:924.1px;width:75.9px;height:75.3px;background:#2b2b2b;"></div>
<svg style="left:1372px;top:924.1px" width="76" height="75.3" viewBox="0 0 76 75.3"><defs><radialGradient id="sph" cx=".62" cy=".33" r=".75"><stop offset="0" stop-color="#fff"/><stop offset=".07" stop-color="#f4f4f4"/><stop offset=".1" stop-color="#c4c4c4"/><stop offset=".45" stop-color="#8a8a8a"/><stop offset=".8" stop-color="#4a4a4a"/><stop offset="1" stop-color="#2a2a2a"/></radialGradient><radialGradient id="sps" cx=".5" cy=".5" r=".5"><stop offset="0" stop-color="#000" stop-opacity=".75"/><stop offset="1" stop-color="#000" stop-opacity="0"/></radialGradient></defs><ellipse cx="34" cy="63.500" rx="30" ry="7" fill="url(#sps)"/><circle cx="39.200" cy="39.500" r="26.300" fill="url(#sph)"/></svg>
<span style="left:1458.4px;top:916.0px;font:normal 12.5px/16px 'Liberation Sans',sans-serif;color:#9a9a9a;transform:scaleX(0.9649);transform-origin:0 0;-webkit-text-stroke:0.2px;">Prim</span>
<div style="left:1508px;top:914.2px;width:396.8px;height:21.7px;background:#1f2124;border-radius:2.5px;"></div>
<span style="left:1515.8px;top:918.0px;font:normal 12.5px/16px 'Liberation Sans',sans-serif;color:#e0e0e0;letter-spacing:0.216px;-webkit-text-stroke:0.2px;">/World/Xform</span>
<div style="left:1457.8px;top:946.1px;width:447px;height:21.7px;background:#1f2124;border-radius:2.5px;"></div>
<div style="left:1886px;top:946.1px;width:18.8px;height:21.7px;background:#2c2e31;border-radius:0 2.5px 2.5px 0;"></div>
<span style="left:1465.6px;top:949.7px;font:normal 12.5px/16px 'Liberation Sans',sans-serif;color:#e0e0e0;transform:scaleX(0.9869);transform-origin:0 0;-webkit-text-stroke:0.2px;">None</span>
<svg style="left:1890.85px;top:952.95px" width="9.3" height="7.4" viewBox="0 0 9.3 7.4"><path d="M0 0H9.3 L4.65 7.4 Z" fill="#e0e0e0"/></svg>
<span style="left:1458.4px;top:979.9px;font:normal 12.5px/16px 'Liberation Sans',sans-serif;color:#9a9a9a;transform:scaleX(0.9521);transform-origin:0 0;-webkit-text-stroke:0.2px;">Strength</span>
<div style="left:1508px;top:978px;width:396.8px;height:21.7px;background:#1f2124;border-radius:2.5px;"></div>
<div style="left:1883px;top:978px;width:21.8px;height:21.7px;background:#2c2e31;border-radius:0 2.5px 2.5px 0;"></div>
<span style="left:1515.8px;top:981.6px;font:normal 12.5px/16px 'Liberation Sans',sans-serif;color:#e0e0e0;transform:scaleX(0.9587);transform-origin:0 0;-webkit-text-stroke:0.2px;">Weaker than Descendants</span>
<svg style="left:1889.15px;top:984.85px" width="9.3" height="7.4" viewBox="0 0 9.3 7.4"><path d="M0 0H9.3 L4.65 7.4 Z" fill="#e0e0e0"/></svg>
<div style="left:1356.2px;top:1027.3px;width:554.5px;height:70px;background:#333636;border-radius:2.5px 2.5px 0 0;"></div>
<svg style="left:1362.4px;top:1037.4px" width="6.5" height="5.8" viewBox="0 0 6.5 5.8"><path d="M0 0H6.5 L3.25 5.8 Z" fill="#dcdcdc"/></svg>
<span style="left:1377.6px;top:1032.8px;font:normal 12.5px/16px 'Liberation Sans',sans-serif;color:#d2d2d2;transform:scaleX(0.9992);transform-origin:0 0;-webkit-text-stroke:0.2px;">Visual</span>
<span style="left:1362.4px;top:1059.2px;font:normal 12.5px/16px 'Liberation Sans',sans-serif;color:#b4b4b4;transform:scaleX(0.9579);transform-origin:0 0;-webkit-text-stroke:0.2px;">Purpose</span>
<div style="left:1535.3px;top:1059.8px;width:353.4px;height:21.1px;background:#1f2124;border-radius:2.5px;"></div>
<span style="left:1543.1px;top:1063.1px;font:normal 12.5px/16px 'Liberation Sans',sans-serif;color:#e0e0e0;letter-spacing:0.038px;-webkit-text-stroke:0.2px;">default</span>
<svg style="left:1873.25px;top:1066.35px" width="9.3" height="7.4" viewBox="0 0 9.3 7.4"><path d="M0 0H9.3 L4.65 7.4 Z" fill="#e0e0e0"/></svg>
<div style="left:1896px;top:1067.3px;width:4.9px;height:4.9px;background:#5a5a5a;border-radius:1px;"></div>
<div style="left:1356.2px;top:1084px;width:554.5px;height:13.300px;overflow:hidden"><div style="left:179.100px;top:2.200px;width:353.400px;height:21px;background:#1f2124;border-radius:2.500px"></div><span style="left:6.200px;top:1.100px;font:normal 12.500px/16px 'Liberation Sans',sans-serif;color:#b4b4b4">Visibility</span><span style="left:186.900px;top:5.300px;font:normal 12.500px/16px 'Liberation Sans',sans-serif;color:#e0e0e0">inherited</span><svg style="left:517.100px;top:9.400px" width="9.300" height="7.400" viewBox="0 0 9.300 7.400"><path d="M0 0H9.300L4.650 7.400Z" fill="#e0e0e0"/></svg><div style="left:539.800px;top:10.500px;width:4.900px;height:4.900px;background:#5a5a5a;border-radius:1px"></div></div>
<!-- content panel -->
<div style="left:10px;top:789px;width:1341.5px;height:22.5px;background:#1f2124;"></div>
<div style="left:10.2px;top:792.3px;width:76.7px;height:19.8px;background:#444;border-radius:5px 5px 0 0;"></div>
<span style="left:18.4px;top:795.2px;font:normal 12.5px/16px 'Liberation Sans',sans-serif;color:#e0e0e0;transform:scaleX(0.9730);transform-origin:0 0;-webkit-text-stroke:0.2px;">Content</span>
<div style="left:91.1px;top:792.5px;width:77.6px;height:19px;background:#2e2e2e;border-radius:5px 5px 0 0;"></div>
<span style="left:99.3px;top:795.2px;font:normal 12.5px/16px 'Liberation Sans',sans-serif;color:#9e9e9e;transform:scaleX(0.9591);transform-origin:0 0;-webkit-text-stroke:0.2px;">Console</span>
<div style="left:172.9px;top:792.5px;width:138px;height:19px;background:#2e2e2e;border-radius:5px 5px 0 0;"></div>
<span style="left:181.1px;top:795.2px;font:normal 12.5px/16px 'Liberation Sans',sans-serif;color:#9e9e9e;transform:scaleX(0.9658);transform-origin:0 0;-webkit-text-stroke:0.2px;">Isaac Assets (Beta)</span>
<div style="left:16.2px;top:822.2px;width:60.8px;height:23.4px;background:#1f2124;border-radius:4px;"></div>
<svg style="left:17.5px;top:828px" width="13" height="13" viewBox="0 0 13 13"><path d="M5.600 .3H7.400V5.600H12.700V7.400H7.400V12.700H5.600V7.400H.3V5.600H5.600Z" fill="#6db26c"/></svg>
<span style="left:34.3px;top:827.2px;font:normal 12.5px/16px 'Liberation Sans',sans-serif;color:#cfcfcf;transform:scaleX(0.9679);transform-origin:0 0;-webkit-text-stroke:0.2px;">Import</span>
<svg style="left:86px;top:828px" width="34" height="13" viewBox="0 0 34 13"><path d="M8 1.500L2.800 6.400L8 11.300" stroke="#4d5a5a" stroke-width="1.800" fill="none"/><path d="M26.200 1.500L31.400 6.400L26.200 11.300" stroke="#4d5a5a" stroke-width="1.800" fill="none"/></svg>
<div style="left:126.9px;top:821.4px;width:867.3px;height:25.6px;background:#1f2124;"></div>
<div style="left:132px;top:829.9px;width:57.2px;height:12px;background:#000;"></div>
<span style="left:189.7px;top:828.2px;font:normal 12.5px/16px 'Liberation Sans',sans-serif;color:#cfcfcf;letter-spacing:0.626px;-webkit-text-stroke:0.2px;">://</span>
<svg style="left:952px;top:829.7px" width="9.8" height="7.6" viewBox="0 0 9.8 7.6"><path d="M0 0H9.8 L4.9 7.6 Z" fill="#c8c8c8"/></svg>
<svg style="left:974px;top:825px" width="15" height="19" viewBox="0 0 15 19"><path d="M.3 .3H14.300V18.300L7.300 12.600L.3 18.300Z" fill="#5a5a5a"/></svg>
<div style="left:996.5px;top:821.4px;width:299px;height:25.6px;background:#1f2124;"></div>
<svg style="left:1002px;top:826px" width="16" height="16" viewBox="0 0 16 16"><circle cx="7.600" cy="6.700" r="3.900" fill="none" stroke="#d0d0d0" stroke-width="1.500"/><path d="M10.300 9.700L13.400 13" stroke="#d0d0d0" stroke-width="1.700"/><path d="M.8 11.600V14.300H3.500Z" fill="#d0d0d0"/></svg>
<span style="left:1033.5px;top:827.2px;font:normal 12.5px/16px 'Liberation Sans',sans-serif;color:#6a6a6a;transform:scaleX(0.9139);transform-origin:0 0;-webkit-text-stroke:0.2px;">Search</span>
<svg style="left:1301px;top:826px" width="42" height="17" viewBox="0 0 42 17"><path d="M1 1.700H17.300L10.900 9V15.600H7.400V9Z" fill="#c0c0c0"/><path d="M19 13.300V16H16.300Z" fill="#c0c0c0"/><g fill="#c8c8c8"><rect x="25.200" y="1.800" width="15.800" height="2.300"/><rect x="25.200" y="7.200" width="15.800" height="2.300"/><rect x="25.200" y="12.600" width="15.800" height="2.300"/></g></svg>
<div style="left:14px;top:853.3px;width:302px;height:243.7px;background:#1f2124;"></div>
<div style="left:306.6px;top:856.2px;width:6.3px;height:72.8px;background:#5e5e5e;border-radius:3.1px;"></div>
<svg style="left:24px;top:857.8px" width="10" height="10" viewBox="0 0 10 10"><rect x=".1" y=".1" width="9.8" height="9.8" rx="1.6" fill="#a9a9a9"/><rect x="2" y="4.2" width="6" height="1.6" fill="#1f2124"/></svg>
<svg style="left:42px;top:853.3px" width="14.5" height="18" viewBox="0 0 14.5 18"><path d="M0 0H14.200V17.800L7.100 11.800L0 17.800Z" fill="#d4c382"/></svg>
<span style="left:63.4px;top:856.0px;font:normal 12.5px/16px 'Liberation Sans',sans-serif;color:#bcbcbc;transform:scaleX(0.9707);transform-origin:0 0;-webkit-text-stroke:0.2px;">Bookmarks</span>
<svg style="left:60px;top:875.3px" width="18.2" height="14" viewBox="0 0 18.2 14"><path d="M.2 1.800Q.2 .3 1.700 .3H6.400L8.300 2.500H16.400Q17.900 2.500 17.900 4V12.200Q17.900 13.700 16.400 13.700H1.700Q.2 13.700 .2 12.200Z" fill="#a8a8a8"/></svg>
<span style="left:82.8px;top:876.1px;font:normal 12.5px/16px 'Liberation Sans',sans-serif;color:#bcbcbc;transform:scaleX(0.9287);transform-origin:0 0;-webkit-text-stroke:0.2px;">Built In URDF Files</span>
<div style="left:14px;top:893px;width:290.2px;height:19.9px;background:#788a8f;"></div>
<svg style="left:24px;top:897.8px" width="10" height="10" viewBox="0 0 10 10"><rect x=".1" y=".1" width="9.8" height="9.8" rx="1.6" fill="#a2a9ab"/><rect x="2" y="4.2" width="6" height="1.6" fill="#8a9a9e"/></svg>
<svg style="left:39.8px;top:893.2px" width="18.4" height="18.4" viewBox="0 0 18.4 18.4"><defs><linearGradient id="omg" x1=".2" y1="0" x2=".8" y2="1"><stop offset="0" stop-color="#84c80a"/><stop offset=".55" stop-color="#6fb000"/><stop offset="1" stop-color="#5a9600"/></linearGradient></defs><circle cx="9.200" cy="9.200" r="5.900" fill="none" stroke="url(#omg)" stroke-width="5.600"/><path d="M10.400 6.300A3.200 3.200 0 0 1 12.300 10" fill="none" stroke="#3f7200" stroke-width="1.300" opacity=".7"/></svg>
<span style="left:63.4px;top:896.3px;font:normal 12.5px/16px 'Liberation Sans',sans-serif;color:#2d3335;transform:scaleX(0.9216);transform-origin:0 0;-webkit-text-stroke:0.2px;">Omniverse</span>
<svg style="left:44.1px;top:917.9px" width="10" height="10" viewBox="0 0 10 10"><rect x=".1" y=".1" width="9.8" height="9.8" rx="1.6" fill="#b2b2b2"/><rect x="2" y="4.2" width="6" height="1.6" fill="#1f2124"/><rect x="4.2" y="2" width="1.6" height="6" fill="#1f2124"/></svg>
<svg style="left:60px;top:916px" width="18" height="13" viewBox="0 0 18 13"><path d="M4 .2H14L16.900 5H1.100Z" fill="#a9a9a9"/><rect x=".2" y="6" width="17.600" height="6" rx="1.700" fill="#a9a9a9"/><rect x="11.400" y="8.200" width="1.800" height="1.800" fill="#1f2124"/><rect x="14.300" y="8.200" width="1.800" height="1.800" fill="#1f2124"/></svg>
<svg style="left:44.1px;top:937.88px" width="10" height="10" viewBox="0 0 10 10"><rect x=".1" y=".1" width="9.8" height="9.8" rx="1.6" fill="#b2b2b2"/><rect x="2" y="4.2" width="6" height="1.6" fill="#1f2124"/><rect x="4.2" y="2" width="1.6" height="6" fill="#1f2124"/></svg>
<svg style="left:60px;top:935.98px" width="18" height="13" viewBox="0 0 18 13"><path d="M4 .2H14L16.900 5H1.100Z" fill="#a9a9a9"/><rect x=".2" y="6" width="17.600" height="6" rx="1.700" fill="#a9a9a9"/><rect x="11.400" y="8.200" width="1.800" height="1.800" fill="#1f2124"/><rect x="14.300" y="8.200" width="1.800" height="1.800" fill="#1f2124"/></svg>
<svg style="left:44.1px;top:957.86px" width="10" height="10" viewBox="0 0 10 10"><rect x=".1" y=".1" width="9.8" height="9.8" rx="1.6" fill="#b2b2b2"/><rect x="2" y="4.2" width="6" height="1.6" fill="#1f2124"/><rect x="4.2" y="2" width="1.6" height="6" fill="#1f2124"/></svg>
<svg style="left:60px;top:955.96px" width="18" height="13" viewBox="0 0 18 13"><path d="M4 .2H14L16.900 5H1.100Z" fill="#a9a9a9"/><rect x=".2" y="6" width="17.600" height="6" rx="1.700" fill="#a9a9a9"/><rect x="11.400" y="8.200" width="1.800" height="1.800" fill="#1f2124"/><rect x="14.300" y="8.200" width="1.800" height="1.800" fill="#1f2124"/></svg>
<svg style="left:44.1px;top:977.84px" width="10" height="10" viewBox="0 0 10 10"><rect x=".1" y=".1" width="9.8" height="9.8" rx="1.6" fill="#b2b2b2"/><rect x="2" y="4.2" width="6" height="1.6" fill="#1f2124"/><rect x="4.2" y="2" width="1.6" height="6" fill="#1f2124"/></svg>
<svg style="left:60px;top:975.94px" width="18" height="13" viewBox="0 0 18 13"><path d="M4 .2H14L16.900 5H1.100Z" fill="#a9a9a9"/><rect x=".2" y="6" width="17.600" height="6" rx="1.700" fill="#a9a9a9"/><rect x="11.400" y="8.200" width="1.800" height="1.800" fill="#1f2124"/><rect x="14.300" y="8.200" width="1.800" height="1.800" fill="#1f2124"/></svg>
<svg style="left:44.1px;top:997.82px" width="10" height="10" viewBox="0 0 10 10"><rect x=".1" y=".1" width="9.8" height="9.8" rx="1.6" fill="#b2b2b2"/><rect x="2" y="4.2" width="6" height="1.6" fill="#1f2124"/><rect x="4.2" y="2" width="1.6" height="6" fill="#1f2124"/></svg>
<svg style="left:60px;top:995.92px" width="18" height="13" viewBox="0 0 18 13"><path d="M4 .2H14L16.900 5H1.100Z" fill="#a9a9a9"/><rect x=".2" y="6" width="17.600" height="6" rx="1.700" fill="#a9a9a9"/><rect x="11.400" y="8.200" width="1.800" height="1.800" fill="#1f2124"/><rect x="14.300" y="8.200" width="1.800" height="1.800" fill="#1f2124"/></svg>
<svg style="left:44.1px;top:1017.8px" width="10" height="10" viewBox="0 0 10 10"><rect x=".1" y=".1" width="9.8" height="9.8" rx="1.6" fill="#b2b2b2"/><rect x="2" y="4.2" width="6" height="1.6" fill="#1f2124"/><rect x="4.2" y="2" width="1.6" height="6" fill="#1f2124"/></svg>
<svg style="left:60px;top:1015.9px" width="18" height="13" viewBox="0 0 18 13"><path d="M4 .2H14L16.900 5H1.100Z" fill="#a9a9a9"/><rect x=".2" y="6" width="17.600" height="6" rx="1.700" fill="#a9a9a9"/><rect x="11.400" y="8.200" width="1.800" height="1.800" fill="#1f2124"/><rect x="14.300" y="8.200" width="1.800" height="1.800" fill="#1f2124"/></svg>
<svg style="left:44.1px;top:1037.78px" width="10" height="10" viewBox="0 0 10 10"><rect x=".1" y=".1" width="9.8" height="9.8" rx="1.6" fill="#b2b2b2"/><rect x="2" y="4.2" width="6" height="1.6" fill="#1f2124"/><rect x="4.2" y="2" width="1.6" height="6" fill="#1f2124"/></svg>
<svg style="left:60px;top:1035.88px" width="18" height="13" viewBox="0 0 18 13"><path d="M4 .2H14L16.900 5H1.100Z" fill="#a9a9a9"/><rect x=".2" y="6" width="17.600" height="6" rx="1.700" fill="#a9a9a9"/><rect x="11.400" y="8.200" width="1.800" height="1.800" fill="#1f2124"/><rect x="14.300" y="8.200" width="1.800" height="1.800" fill="#1f2124"/></svg>
<svg style="left:44.1px;top:1057.76px" width="10" height="10" viewBox="0 0 10 10"><rect x=".1" y=".1" width="9.8" height="9.8" rx="1.6" fill="#b2b2b2"/><rect x="2" y="4.2" width="6" height="1.6" fill="#1f2124"/><rect x="4.2" y="2" width="1.6" height="6" fill="#1f2124"/></svg>
<svg style="left:60px;top:1055.86px" width="18" height="13" viewBox="0 0 18 13"><path d="M4 .2H14L16.900 5H1.100Z" fill="#a9a9a9"/><rect x=".2" y="6" width="17.600" height="6" rx="1.700" fill="#a9a9a9"/><rect x="11.400" y="8.200" width="1.800" height="1.800" fill="#1f2124"/><rect x="14.300" y="8.200" width="1.800" height="1.800" fill="#1f2124"/></svg>
<svg style="left:44.1px;top:1077.74px" width="10" height="10" viewBox="0 0 10 10"><rect x=".1" y=".1" width="9.8" height="9.8" rx="1.6" fill="#b2b2b2"/><rect x="2" y="4.2" width="6" height="1.6" fill="#1f2124"/><rect x="4.2" y="2" width="1.6" height="6" fill="#1f2124"/></svg>
<svg style="left:60px;top:1075.84px" width="18" height="13" viewBox="0 0 18 13"><path d="M4 .2H14L16.900 5H1.100Z" fill="#a9a9a9"/><rect x=".2" y="6" width="17.600" height="6" rx="1.700" fill="#a9a9a9"/><rect x="11.400" y="8.200" width="1.800" height="1.800" fill="#1f2124"/><rect x="14.300" y="8.200" width="1.800" height="1.800" fill="#1f2124"/></svg>
<div style="left:14px;top:1090px;width:290px;height:6.500px;overflow:hidden"><svg style="left:46px;top:5.8px" width="18" height="13" viewBox="0 0 18 13"><path d="M4 .2H14L16.900 5H1.100Z" fill="#a9a9a9"/><rect x=".2" y="6" width="17.600" height="6" rx="1.700" fill="#a9a9a9"/><rect x="11.400" y="8.200" width="1.800" height="1.800" fill="#1f2124"/><rect x="14.300" y="8.200" width="1.800" height="1.800" fill="#1f2124"/></svg></div>
<div style="left:84.8px;top:913.9px;width:216.5px;height:177.2px;background:#000;"></div>
<div style="left:302px;top:921px;width:1.4px;height:6.5px;background:#8a8a8a;"></div>
<div style="left:318.3px;top:853.3px;width:801.7px;height:243.7px;background:#1f2124;"></div>
<svg style="left:346.9px;top:887.8px" width="62" height="33" viewBox="0 0 62 33"><defs><linearGradient id="dg0a" x1="0" y1="0" x2="1" y2="0"><stop offset="0" stop-color="#cccccc"/><stop offset=".45" stop-color="#a0a0a0"/><stop offset="1" stop-color="#767676"/></linearGradient><linearGradient id="dg0b" x1="0" y1="0" x2="1" y2="1"><stop offset="0" stop-color="#8e8e8e"/><stop offset="1" stop-color="#4c4c4c"/></linearGradient><linearGradient id="dg0c" x1="0" y1="0" x2="1" y2="0"><stop offset="0" stop-color="#7a7a7a"/><stop offset="1" stop-color="#4e4e4e"/></linearGradient></defs><path d="M2.500 22L27 32.200L60.500 17.500" stroke="#000" stroke-opacity=".35" stroke-width="2" fill="none"/><path d="M1 10.200L34.600 1L59.700 7.500L29.300 18.400Z" fill="url(#dg0a)"/><path d="M29.300 18.400L59.700 7.500V16L26.400 30.400Z" fill="url(#dg0b)"/><path d="M1 10.200L29.300 18.400L26.400 30.400L1 19.300Z" fill="#b6b6b6"/><path d="M3.300 11.900L25.400 18.400L25 26.800L3.300 18.400Z" fill="url(#dg0c)"/><path d="M26.400 17.600L31.800 17.700L31.200 28.400L26.400 30.400Z" fill="#8a8a8a"/><path d="M1 10.200L29.300 18.400" stroke="#e8e8e8" stroke-width=".8"/><circle cx="22.100" cy="23.100" r="2.100" fill="#7fcc28"/><circle cx="22.100" cy="23.100" r="1" fill="#a8e850"/></svg>
<svg style="left:436.9px;top:887.8px" width="62" height="33" viewBox="0 0 62 33"><defs><linearGradient id="dg1a" x1="0" y1="0" x2="1" y2="0"><stop offset="0" stop-color="#cccccc"/><stop offset=".45" stop-color="#a0a0a0"/><stop offset="1" stop-color="#767676"/></linearGradient><linearGradient id="dg1b" x1="0" y1="0" x2="1" y2="1"><stop offset="0" stop-color="#8e8e8e"/><stop offset="1" stop-color="#4c4c4c"/></linearGradient><linearGradient id="dg1c" x1="0" y1="0" x2="1" y2="0"><stop offset="0" stop-color="#7a7a7a"/><stop offset="1" stop-color="#4e4e4e"/></linearGradient></defs><path d="M2.500 22L27 32.200L60.500 17.500" stroke="#000" stroke-opacity=".35" stroke-width="2" fill="none"/><path d="M1 10.200L34.600 1L59.700 7.500L29.300 18.400Z" fill="url(#dg1a)"/><path d="M29.300 18.400L59.700 7.500V16L26.400 30.400Z" fill="url(#dg1b)"/><path d="M1 10.200L29.300 18.400L26.400 30.400L1 19.300Z" fill="#b6b6b6"/><path d="M3.300 11.900L25.400 18.400L25 26.800L3.300 18.400Z" fill="url(#dg1c)"/><path d="M26.400 17.600L31.800 17.700L31.200 28.400L26.400 30.400Z" fill="#8a8a8a"/><path d="M1 10.200L29.300 18.400" stroke="#e8e8e8" stroke-width=".8"/><circle cx="22.100" cy="23.100" r="2.100" fill="#7fcc28"/><circle cx="22.100" cy="23.100" r="1" fill="#a8e850"/></svg>
<svg style="left:526.9px;top:887.8px" width="62" height="33" viewBox="0 0 62 33"><defs><linearGradient id="dg2a" x1="0" y1="0" x2="1" y2="0"><stop offset="0" stop-color="#cccccc"/><stop offset=".45" stop-color="#a0a0a0"/><stop offset="1" stop-color="#767676"/></linearGradient><linearGradient id="dg2b" x1="0" y1="0" x2="1" y2="1"><stop offset="0" stop-color="#8e8e8e"/><stop offset="1" stop-color="#4c4c4c"/></linearGradient><linearGradient id="dg2c" x1="0" y1="0" x2="1" y2="0"><stop offset="0" stop-color="#7a7a7a"/><stop offset="1" stop-color="#4e4e4e"/></linearGradient></defs><path d="M2.500 22L27 32.200L60.500 17.500" stroke="#000" stroke-opacity=".35" stroke-width="2" fill="none"/><path d="M1 10.200L34.600 1L59.700 7.500L29.300 18.400Z" fill="url(#dg2a)"/><path d="M29.300 18.400L59.700 7.500V16L26.400 30.400Z" fill="url(#dg2b)"/><path d="M1 10.200L29.300 18.400L26.400 30.400L1 19.300Z" fill="#b6b6b6"/><path d="M3.300 11.900L25.400 18.400L25 26.800L3.300 18.400Z" fill="url(#dg2c)"/><path d="M26.400 17.600L31.800 17.700L31.200 28.400L26.400 30.400Z" fill="#8a8a8a"/><path d="M1 10.200L29.300 18.400" stroke="#e8e8e8" stroke-width=".8"/><circle cx="22.100" cy="23.100" r="2.100" fill="#7fcc28"/><circle cx="22.100" cy="23.100" r="1" fill="#a8e850"/></svg>
<svg style="left:616.9px;top:887.8px" width="62" height="33" viewBox="0 0 62 33"><defs><linearGradient id="dg3a" x1="0" y1="0" x2="1" y2="0"><stop offset="0" stop-color="#cccccc"/><stop offset=".45" stop-color="#a0a0a0"/><stop offset="1" stop-color="#767676"/></linearGradient><linearGradient id="dg3b" x1="0" y1="0" x2="1" y2="1"><stop offset="0" stop-color="#8e8e8e"/><stop offset="1" stop-color="#4c4c4c"/></linearGradient><linearGradient id="dg3c" x1="0" y1="0" x2="1" y2="0"><stop offset="0" stop-color="#7a7a7a"/><stop offset="1" stop-color="#4e4e4e"/></linearGradient></defs><path d="M2.500 22L27 32.200L60.500 17.500" stroke="#000" stroke-opacity=".35" stroke-width="2" fill="none"/><path d="M1 10.200L34.600 1L59.700 7.500L29.300 18.400Z" fill="url(#dg3a)"/><path d="M29.300 18.400L59.700 7.500V16L26.400 30.400Z" fill="url(#dg3b)"/><path d="M1 10.200L29.300 18.400L26.400 30.400L1 19.300Z" fill="#b6b6b6"/><path d="M3.300 11.900L25.400 18.400L25 26.800L3.300 18.400Z" fill="url(#dg3c)"/><path d="M26.400 17.600L31.800 17.700L31.200 28.400L26.400 30.400Z" fill="#8a8a8a"/><path d="M1 10.200L29.300 18.400" stroke="#e8e8e8" stroke-width=".8"/><circle cx="22.100" cy="23.100" r="2.100" fill="#7fcc28"/><circle cx="22.100" cy="23.100" r="1" fill="#a8e850"/></svg>
<svg style="left:706.9px;top:887.8px" width="62" height="33" viewBox="0 0 62 33"><defs><linearGradient id="dg4a" x1="0" y1="0" x2="1" y2="0"><stop offset="0" stop-color="#cccccc"/><stop offset=".45" stop-color="#a0a0a0"/><stop offset="1" stop-color="#767676"/></linearGradient><linearGradient id="dg4b" x1="0" y1="0" x2="1" y2="1"><stop offset="0" stop-color="#8e8e8e"/><stop offset="1" stop-color="#4c4c4c"/></linearGradient><linearGradient id="dg4c" x1="0" y1="0" x2="1" y2="0"><stop offset="0" stop-color="#7a7a7a"/><stop offset="1" stop-color="#4e4e4e"/></linearGradient></defs><path d="M2.500 22L27 32.200L60.500 17.500" stroke="#000" stroke-opacity=".35" stroke-width="2" fill="none"/><path d="M1 10.200L34.600 1L59.700 7.500L29.300 18.400Z" fill="url(#dg4a)"/><path d="M29.300 18.400L59.700 7.500V16L26.400 30.400Z" fill="url(#dg4b)"/><path d="M1 10.200L29.300 18.400L26.400 30.400L1 19.300Z" fill="#b6b6b6"/><path d="M3.300 11.900L25.400 18.400L25 26.800L3.300 18.400Z" fill="url(#dg4c)"/><path d="M26.400 17.600L31.800 17.700L31.200 28.400L26.400 30.400Z" fill="#8a8a8a"/><path d="M1 10.200L29.300 18.400" stroke="#e8e8e8" stroke-width=".8"/><circle cx="22.100" cy="23.100" r="2.100" fill="#7fcc28"/><circle cx="22.100" cy="23.100" r="1" fill="#a8e850"/></svg>
<svg style="left:796.9px;top:887.8px" width="62" height="33" viewBox="0 0 62 33"><defs><linearGradient id="dg5a" x1="0" y1="0" x2="1" y2="0"><stop offset="0" stop-color="#cccccc"/><stop offset=".45" stop-color="#a0a0a0"/><stop offset="1" stop-color="#767676"/></linearGradient><linearGradient id="dg5b" x1="0" y1="0" x2="1" y2="1"><stop offset="0" stop-color="#8e8e8e"/><stop offset="1" stop-color="#4c4c4c"/></linearGradient><linearGradient id="dg5c" x1="0" y1="0" x2="1" y2="0"><stop offset="0" stop-color="#7a7a7a"/><stop offset="1" stop-color="#4e4e4e"/></linearGradient></defs><path d="M2.500 22L27 32.200L60.500 17.500" stroke="#000" stroke-opacity=".35" stroke-width="2" fill="none"/><path d="M1 10.200L34.600 1L59.700 7.500L29.300 18.400Z" fill="url(#dg5a)"/><path d="M29.300 18.400L59.700 7.500V16L26.400 30.400Z" fill="url(#dg5b)"/><path d="M1 10.200L29.300 18.400L26.400 30.400L1 19.300Z" fill="#b6b6b6"/><path d="M3.300 11.900L25.400 18.400L25 26.800L3.300 18.400Z" fill="url(#dg5c)"/><path d="M26.400 17.600L31.800 17.700L31.200 28.400L26.400 30.400Z" fill="#8a8a8a"/><path d="M1 10.200L29.300 18.400" stroke="#e8e8e8" stroke-width=".8"/><circle cx="22.100" cy="23.100" r="2.100" fill="#7fcc28"/><circle cx="22.100" cy="23.100" r="1" fill="#a8e850"/></svg>
<svg style="left:886.9px;top:887.8px" width="62" height="33" viewBox="0 0 62 33"><defs><linearGradient id="dg6a" x1="0" y1="0" x2="1" y2="0"><stop offset="0" stop-color="#cccccc"/><stop offset=".45" stop-color="#a0a0a0"/><stop offset="1" stop-color="#767676"/></linearGradient><linearGradient id="dg6b" x1="0" y1="0" x2="1" y2="1"><stop offset="0" stop-color="#8e8e8e"/><stop offset="1" stop-color="#4c4c4c"/></linearGradient><linearGradient id="dg6c" x1="0" y1="0" x2="1" y2="0"><stop offset="0" stop-color="#7a7a7a"/><stop offset="1" stop-color="#4e4e4e"/></linearGradient></defs><path d="M2.500 22L27 32.200L60.500 17.500" stroke="#000" stroke-opacity=".35" stroke-width="2" fill="none"/><path d="M1 10.200L34.600 1L59.700 7.500L29.300 18.400Z" fill="url(#dg6a)"/><path d="M29.300 18.400L59.700 7.500V16L26.400 30.400Z" fill="url(#dg6b)"/><path d="M1 10.200L29.300 18.400L26.400 30.400L1 19.300Z" fill="#b6b6b6"/><path d="M3.300 11.900L25.400 18.400L25 26.800L3.300 18.400Z" fill="url(#dg6c)"/><path d="M26.400 17.600L31.800 17.700L31.200 28.400L26.400 30.400Z" fill="#8a8a8a"/><path d="M1 10.200L29.300 18.400" stroke="#e8e8e8" stroke-width=".8"/><circle cx="22.100" cy="23.100" r="2.100" fill="#7fcc28"/><circle cx="22.100" cy="23.100" r="1" fill="#a8e850"/></svg>
<svg style="left:976.9px;top:887.8px" width="62" height="33" viewBox="0 0 62 33"><defs><linearGradient id="dg7a" x1="0" y1="0" x2="1" y2="0"><stop offset="0" stop-color="#cccccc"/><stop offset=".45" stop-color="#a0a0a0"/><stop offset="1" stop-color="#767676"/></linearGradient><linearGradient id="dg7b" x1="0" y1="0" x2="1" y2="1"><stop offset="0" stop-color="#8e8e8e"/><stop offset="1" stop-color="#4c4c4c"/></linearGradient><linearGradient id="dg7c" x1="0" y1="0" x2="1" y2="0"><stop offset="0" stop-color="#7a7a7a"/><stop offset="1" stop-color="#4e4e4e"/></linearGradient></defs><path d="M2.500 22L27 32.200L60.500 17.500" stroke="#000" stroke-opacity=".35" stroke-width="2" fill="none"/><path d="M1 10.200L34.600 1L59.700 7.500L29.300 18.400Z" fill="url(#dg7a)"/><path d="M29.300 18.400L59.700 7.500V16L26.400 30.400Z" fill="url(#dg7b)"/><path d="M1 10.200L29.300 18.400L26.400 30.400L1 19.300Z" fill="#b6b6b6"/><path d="M3.300 11.900L25.400 18.400L25 26.800L3.300 18.400Z" fill="url(#dg7c)"/><path d="M26.400 17.600L31.800 17.700L31.200 28.400L26.400 30.400Z" fill="#8a8a8a"/><path d="M1 10.200L29.300 18.400" stroke="#e8e8e8" stroke-width=".8"/><circle cx="22.100" cy="23.100" r="2.100" fill="#7fcc28"/><circle cx="22.100" cy="23.100" r="1" fill="#a8e850"/></svg>
<svg style="left:346.9px;top:997.8px" width="62" height="33" viewBox="0 0 62 33"><defs><linearGradient id="dg8a" x1="0" y1="0" x2="1" y2="0"><stop offset="0" stop-color="#cccccc"/><stop offset=".45" stop-color="#a0a0a0"/><stop offset="1" stop-color="#767676"/></linearGradient><linearGradient id="dg8b" x1="0" y1="0" x2="1" y2="1"><stop offset="0" stop-color="#8e8e8e"/><stop offset="1" stop-color="#4c4c4c"/></linearGradient><linearGradient id="dg8c" x1="0" y1="0" x2="1" y2="0"><stop offset="0" stop-color="#7a7a7a"/><stop offset="1" stop-color="#4e4e4e"/></linearGradient></defs><path d="M2.500 22L27 32.200L60.500 17.500" stroke="#000" stroke-opacity=".35" stroke-width="2" fill="none"/><path d="M1 10.200L34.600 1L59.700 7.500L29.300 18.400Z" fill="url(#dg8a)"/><path d="M29.300 18.400L59.700 7.500V16L26.400 30.400Z" fill="url(#dg8b)"/><path d="M1 10.200L29.300 18.400L26.400 30.400L1 19.300Z" fill="#b6b6b6"/><path d="M3.300 11.900L25.400 18.400L25 26.800L3.300 18.400Z" fill="url(#dg8c)"/><path d="M26.400 17.600L31.800 17.700L31.200 28.400L26.400 30.400Z" fill="#8a8a8a"/><path d="M1 10.200L29.300 18.400" stroke="#e8e8e8" stroke-width=".8"/><circle cx="22.100" cy="23.100" r="2.100" fill="#7fcc28"/><circle cx="22.100" cy="23.100" r="1" fill="#a8e850"/></svg>
<svg style="left:436.9px;top:997.8px" width="62" height="33" viewBox="0 0 62 33"><defs><linearGradient id="dg9a" x1="0" y1="0" x2="1" y2="0"><stop offset="0" stop-color="#cccccc"/><stop offset=".45" stop-color="#a0a0a0"/><stop offset="1" stop-color="#767676"/></linearGradient><linearGradient id="dg9b" x1="0" y1="0" x2="1" y2="1"><stop offset="0" stop-color="#8e8e8e"/><stop offset="1" stop-color="#4c4c4c"/></linearGradient><linearGradient id="dg9c" x1="0" y1="0" x2="1" y2="0"><stop offset="0" stop-color="#7a7a7a"/><stop offset="1" stop-color="#4e4e4e"/></linearGradient></defs><path d="M2.500 22L27 32.200L60.500 17.500" stroke="#000" stroke-opacity=".35" stroke-width="2" fill="none"/><path d="M1 10.200L34.600 1L59.700 7.500L29.300 18.400Z" fill="url(#dg9a)"/><path d="M29.300 18.400L59.700 7.500V16L26.400 30.400Z" fill="url(#dg9b)"/><path d="M1 10.200L29.300 18.400L26.400 30.400L1 19.300Z" fill="#b6b6b6"/><path d="M3.300 11.900L25.400 18.400L25 26.800L3.300 18.400Z" fill="url(#dg9c)"/><path d="M26.400 17.600L31.800 17.700L31.200 28.400L26.400 30.400Z" fill="#8a8a8a"/><path d="M1 10.200L29.300 18.400" stroke="#e8e8e8" stroke-width=".8"/><circle cx="22.100" cy="23.100" r="2.100" fill="#7fcc28"/><circle cx="22.100" cy="23.100" r="1" fill="#a8e850"/></svg>
<svg style="left:526.9px;top:997.8px" width="62" height="33" viewBox="0 0 62 33"><defs><linearGradient id="dg10a" x1="0" y1="0" x2="1" y2="0"><stop offset="0" stop-color="#cccccc"/><stop offset=".45" stop-color="#a0a0a0"/><stop offset="1" stop-color="#767676"/></linearGradient><linearGradient id="dg10b" x1="0" y1="0" x2="1" y2="1"><stop offset="0" stop-color="#8e8e8e"/><stop offset="1" stop-color="#4c4c4c"/></linearGradient><linearGradient id="dg10c" x1="0" y1="0" x2="1" y2="0"><stop offset="0" stop-color="#7a7a7a"/><stop offset="1" stop-color="#4e4e4e"/></linearGradient></defs><path d="M2.500 22L27 32.200L60.500 17.500" stroke="#000" stroke-opacity=".35" stroke-width="2" fill="none"/><path d="M1 10.200L34.600 1L59.700 7.500L29.300 18.400Z" fill="url(#dg10a)"/><path d="M29.300 18.400L59.700 7.500V16L26.400 30.400Z" fill="url(#dg10b)"/><path d="M1 10.200L29.300 18.400L26.400 30.400L1 19.300Z" fill="#b6b6b6"/><path d="M3.300 11.900L25.400 18.400L25 26.800L3.300 18.400Z" fill="url(#dg10c)"/><path d="M26.400 17.600L31.800 17.700L31.200 28.400L26.400 30.400Z" fill="#8a8a8a"/><path d="M1 10.200L29.300 18.400" stroke="#e8e8e8" stroke-width=".8"/><circle cx="22.100" cy="23.100" r="2.100" fill="#7fcc28"/><circle cx="22.100" cy="23.100" r="1" fill="#a8e850"/></svg>
<svg style="left:616.9px;top:997.8px" width="62" height="33" viewBox="0 0 62 33"><defs><linearGradient id="dg11a" x1="0" y1="0" x2="1" y2="0"><stop offset="0" stop-color="#cccccc"/><stop offset=".45" stop-color="#a0a0a0"/><stop offset="1" stop-color="#767676"/></linearGradient><linearGradient id="dg11b" x1="0" y1="0" x2="1" y2="1"><stop offset="0" stop-color="#8e8e8e"/><stop offset="1" stop-color="#4c4c4c"/></linearGradient><linearGradient id="dg11c" x1="0" y1="0" x2="1" y2="0"><stop offset="0" stop-color="#7a7a7a"/><stop offset="1" stop-color="#4e4e4e"/></linearGradient></defs><path d="M2.500 22L27 32.200L60.500 17.500" stroke="#000" stroke-opacity=".35" stroke-width="2" fill="none"/><path d="M1 10.200L34.600 1L59.700 7.500L29.300 18.400Z" fill="url(#dg11a)"/><path d="M29.300 18.400L59.700 7.500V16L26.400 30.400Z" fill="url(#dg11b)"/><path d="M1 10.200L29.300 18.400L26.400 30.400L1 19.300Z" fill="#b6b6b6"/><path d="M3.300 11.900L25.400 18.400L25 26.800L3.300 18.400Z" fill="url(#dg11c)"/><path d="M26.400 17.600L31.800 17.700L31.200 28.400L26.400 30.400Z" fill="#8a8a8a"/><path d="M1 10.200L29.300 18.400" stroke="#e8e8e8" stroke-width=".8"/><circle cx="22.100" cy="23.100" r="2.100" fill="#7fcc28"/><circle cx="22.100" cy="23.100" r="1" fill="#a8e850"/></svg>
<div style="left:338px;top:938.2px;width:707.2px;height:28.6px;background:#000;"></div>
<div style="left:338.9px;top:1049.9px;width:340.8px;height:25px;background:#000;"></div>
<svg style="left:704px;top:984px" width="66" height="52" viewBox="0 0 66 52"><defs><linearGradient id="fo1" x1="0" y1="0" x2=".3" y2="1"><stop offset="0" stop-color="#a6a6a6"/><stop offset="1" stop-color="#8a8a8a"/></linearGradient></defs><path d="M4.500 48L10 50.500L62 38.500" stroke="#000" stroke-opacity=".35" stroke-width="2.500" fill="none"/><path d="M3.300 5.600Q3.300 4.300 4.600 4.100L21.600 2.800Q22.700 2.800 23.100 3.800L24.800 6.500L56.300 2.700Q57.300 2.600 57.300 3.600V10L7 19V47L3.300 45.500Z" fill="#8c8c8c"/><path d="M7 12L56.500 5V12L12 21V46.500L7 46Z" fill="#dedede"/><path d="M10.200 21.200Q10.200 19.400 12 19L28.600 15.800Q29.600 15.600 30 14.600L30.800 13Q31.200 12.200 32.200 12L60.600 8.300Q62 8.100 62 9.500L61.200 36.500Q61.200 37.700 60 38L12.300 49.200Q10.200 49.600 10.200 47.500Z" fill="url(#fo1)"/></svg>
<span style="left:708.0px;top:1047.1px;font:normal 12.5px/16px 'Liberation Sans',sans-serif;color:#c0c0c0;transform:scaleX(0.9658);transform-origin:0 0;-webkit-text-stroke:0.25px;">Add New</span>
<span style="left:696.4px;top:1061.3px;font:normal 12.5px/16px 'Liberation Sans',sans-serif;color:#c0c0c0;transform:scaleX(0.9554);transform-origin:0 0;-webkit-text-stroke:0.25px;">Connection ...</span>
<div style="left:925.9px;top:1075px;width:178.1px;height:20.3px;background:#3e3e3e;border-radius:2px;"></div>
<div style="left:934.7px;top:1078px;width:144px;height:14.3px;background:#1f2124;border-radius:7px;"></div>
<div style="left:983.5px;top:1080.1px;width:23.6px;height:10.1px;background:#a6a6a6;border-radius:5px;"></div>
<svg style="left:1081.9px;top:1078px" width="17" height="15" viewBox="0 0 17 15"><g fill="#9c9c9c"><rect x="0" y="0" width="4.600" height="3.600"/><rect x="6" y="0" width="10.500" height="3.600"/><rect x="0" y="5.300" width="4.600" height="3.600"/><rect x="6" y="5.300" width="10.500" height="3.600"/><rect x="0" y="10.600" width="4.600" height="3.600"/><rect x="6" y="10.600" width="10.500" height="3.600"/></g></svg>
<div style="left:1111px;top:856px;width:5.7px;height:232px;background:#626262;border-radius:2.8px;"></div>
<div style="left:1122.2px;top:853.3px;width:223.6px;height:243.7px;background:#1f2124;"></div>
<div style="left:1126.2px;top:854px;width:203.8px;height:94px;background:#333;border-radius:2px;"></div>
<svg style="left:1135.1px;top:865.45px" width="7.6" height="4.7" viewBox="0 0 7.6 4.7"><path d="M0 0H7.6 L3.8 4.7 Z" fill="#a0a0a0"/></svg>
<div style="left:1129.4px;top:883.2px;width:197.4px;height:1.6px;background:#4c4c4c;"></div>
<span style="left:1129.4px;top:886.9px;font:normal 12.3px/16px 'Liberation Sans',sans-serif;color:#c4c4c4;letter-spacing:0.117px;-webkit-text-stroke:0.2px;">Date Modified 05/02/2024 05:41PM</span>
<span style="left:1129.4px;top:901.1px;font:normal 12.3px/16px 'Liberation Sans',sans-serif;color:#c4c4c4;transform:scaleX(0.9492);transform-origin:0 0;-webkit-text-stroke:0.2px;">Created by</span>
<span style="left:1129.4px;top:915.3px;font:normal 12.3px/16px 'Liberation Sans',sans-serif;color:#c4c4c4;letter-spacing:0.055px;-webkit-text-stroke:0.2px;">Modified by</span>
<span style="left:1129.4px;top:929.4px;font:normal 12.3px/16px 'Liberation Sans',sans-serif;color:#c4c4c4;transform:scaleX(0.9444);transform-origin:0 0;-webkit-text-stroke:0.2px;">File size</span>
<span style="left:1284.1px;top:929.4px;font:normal 12.3px/16px 'Liberation Sans',sans-serif;color:#c4c4c4;transform:scaleX(0.9665);transform-origin:0 0;-webkit-text-stroke:0.2px;">0.00 KB</span>
<div style="left:1126.2px;top:951.3px;width:203.8px;height:145.7px;background:#333;border-radius:2px 2px 0 0;"></div>
<svg style="left:1135.1px;top:962.25px" width="7.6" height="4.7" viewBox="0 0 7.6 4.7"><path d="M0 0H7.6 L3.8 4.7 Z" fill="#a0a0a0"/></svg>
<span style="left:1149.0px;top:957.4px;font:normal 12.5px/16px 'Liberation Sans',sans-serif;color:#dcdcdc;transform:scaleX(0.9681);transform-origin:0 0;-webkit-text-stroke:0.2px;">Checkpoints</span>
<svg style="left:1180px;top:1004px" width="84" height="93" viewBox="0 0 84 93"><defs><linearGradient id="dc1" x1="0" y1="0" x2="1" y2="1"><stop offset="0" stop-color="#8e8e8e"/><stop offset="1" stop-color="#7a7a7a"/></linearGradient></defs><path d="M2 81L18 90.500V82Z" fill="#1a1a1a" opacity=".8"/><path d="M18.500 5.500L66.800 2.300L77.600 11.500V79.500L18.500 90.500Z" fill="url(#dc1)"/><path d="M66.800 2.300L77.600 11.500L68 11.800Z" fill="#c8c8c8"/><g stroke="#6c6c6c" stroke-width=".9" fill="none"><path d="M34 38.500L65 33.500M34 44L65 39M34 49.500L65 44.500M34 55L65 50M34 60.500L65 55.500"/></g><path d="M70 67.500L70.500 84L74.300 80.500L77 86L79.500 84.800L77 79.500L81.500 79Z" fill="#c4c4c4" stroke="#333" stroke-width=".7"/></svg>
<div style="left:1336.6px;top:856px;width:6.4px;height:193.6px;background:#9e9e9e;border-radius:3.2px;"></div>
<div style="left:9px;top:1101px;width:1919px;height:1.9px;background:#1f1b1a;"></div>
<div style="left:9px;top:1102.9px;width:1919px;height:29.1px;background:#444;"></div>
<div style="left:9px;top:1131px;width:1919px;height:1px;background:#2a2a2a;"></div>
<div style="left:9px;top:45px;width:1px;height:1087px;background:#2c2c2c;"></div>
<div style="left:1927px;top:45px;width:1px;height:1087px;background:#2c2c2c;"></div>
</div></div>
</body>
</html>
